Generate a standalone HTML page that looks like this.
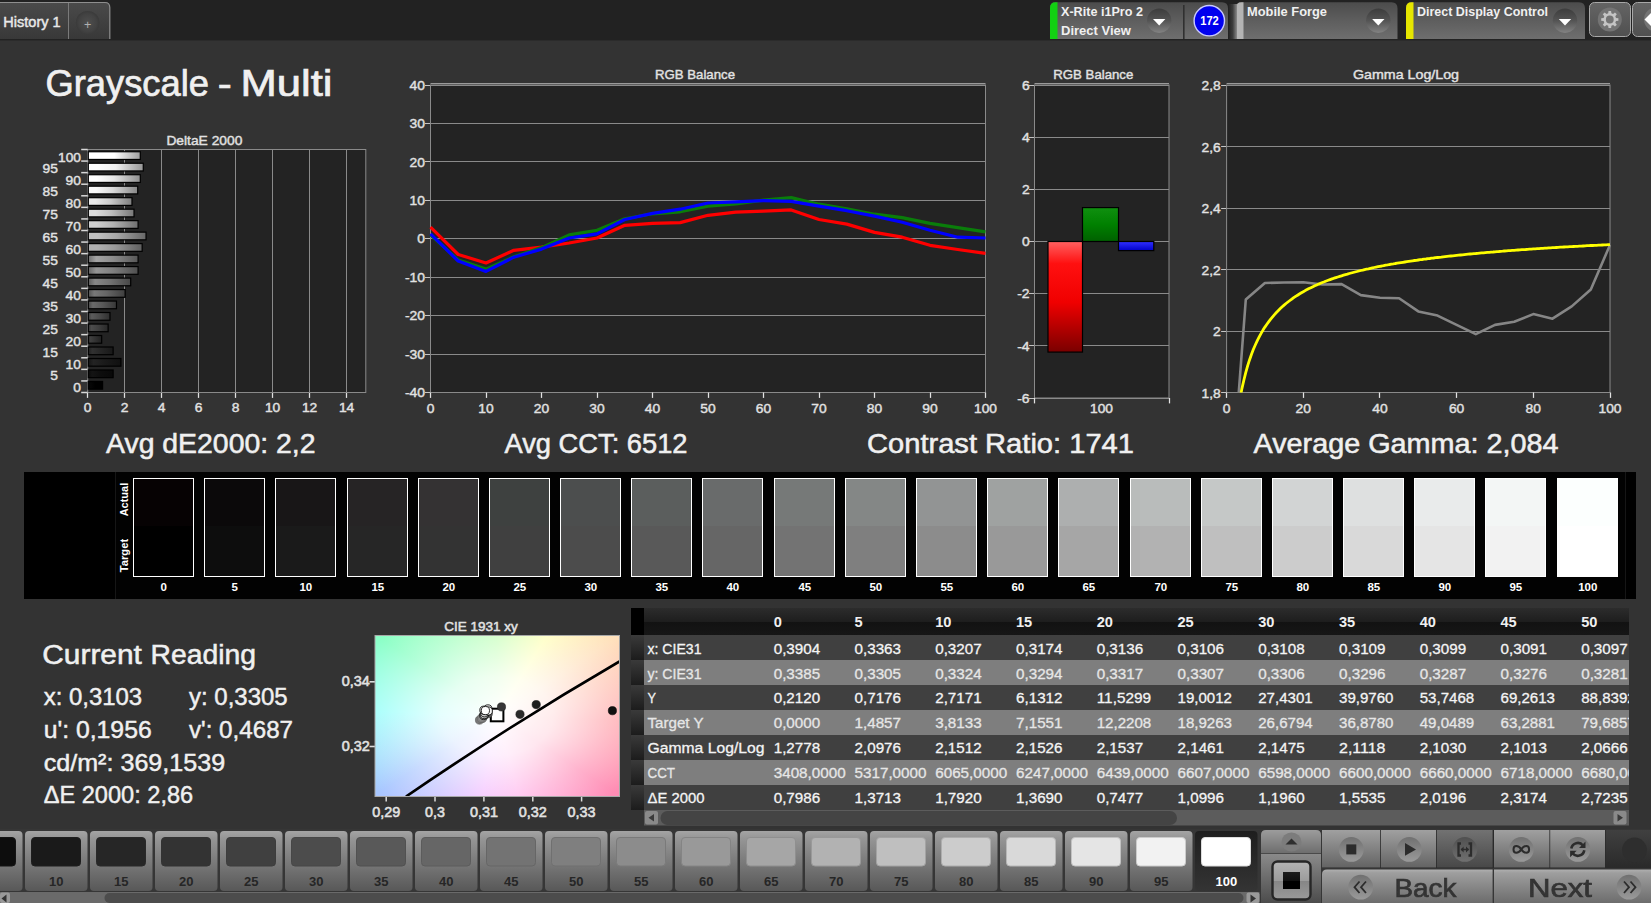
<!DOCTYPE html>
<html lang="en"><head><meta charset="utf-8"><title>Grayscale - Multi</title>
<style>html,body{margin:0;padding:0;background:#333333;}body{width:1651px;height:903px;position:relative;overflow:hidden;font-family:'Liberation Sans', sans-serif;}svg{position:absolute;left:0;top:0;}svg text{font-family:'Liberation Sans', sans-serif;}</style></head>
<body>
<div style="position:absolute;left:375px;top:635.5px;width:244.5px;height:161px;background:radial-gradient(ellipse 160px 112px at 122px 80px, rgba(255,255,255,1) 0%, rgba(255,255,255,0.78) 35%, rgba(255,255,255,0.34) 70%, rgba(255,255,255,0) 100%),conic-gradient(from 0deg at 122px 80px, #c4ffb8 0deg, #ffffb8 32deg, #ffe0bc 57deg, #ffa4aa 92deg, #ff8cb4 123deg, #ffb4ec 165deg, #f2b8ff 190deg, #a8c6ff 237deg, #8cfffa 272deg, #8cffc6 304deg, #c4ffb8 360deg);"></div>
<svg width="1651" height="903" viewBox="0 0 1651 903">
<defs>
<linearGradient id="tabg" x1="0" y1="0" x2="0" y2="1"><stop offset="0" stop-color="#4a4a4a"/><stop offset="1" stop-color="#383838"/></linearGradient>
<linearGradient id="devg" x1="0" y1="0" x2="0" y2="1"><stop offset="0" stop-color="#4c4c4c"/><stop offset="0.5" stop-color="#5e5e5e"/><stop offset="1" stop-color="#6e6e6e"/></linearGradient>
<radialGradient id="circd" cx="0.5" cy="0.5" r="0.5"><stop offset="0" stop-color="#4e4e4e"/><stop offset="0.75" stop-color="#424242"/><stop offset="1" stop-color="#3a3a3a"/></radialGradient>
<linearGradient id="circ2" x1="0" y1="0" x2="0" y2="1"><stop offset="0" stop-color="#3c3c3c"/><stop offset="0.5" stop-color="#545454"/><stop offset="1" stop-color="#828282"/></linearGradient>
<linearGradient id="glow" x1="0" y1="0" x2="1" y2="0"><stop offset="0" stop-color="#222222"/><stop offset="0.5" stop-color="#3c3c3c"/><stop offset="1" stop-color="#8a8a8a"/></linearGradient>
<linearGradient id="btng" x1="0" y1="0" x2="0" y2="1"><stop offset="0" stop-color="#646464"/><stop offset="1" stop-color="#505050"/></linearGradient>
<linearGradient id="db100" x1="0" y1="0" x2="1" y2="0"><stop offset="0" stop-color="#ffffff"/><stop offset="0.16" stop-color="#ffffff"/><stop offset="0.5" stop-color="#ffffff"/><stop offset="1" stop-color="#9e9e9e"/></linearGradient>
<linearGradient id="db95" x1="0" y1="0" x2="1" y2="0"><stop offset="0" stop-color="#ffffff"/><stop offset="0.16" stop-color="#ffffff"/><stop offset="0.5" stop-color="#f2f2f2"/><stop offset="1" stop-color="#969696"/></linearGradient>
<linearGradient id="db90" x1="0" y1="0" x2="1" y2="0"><stop offset="0" stop-color="#ffffff"/><stop offset="0.16" stop-color="#ffffff"/><stop offset="0.5" stop-color="#e5e5e5"/><stop offset="1" stop-color="#8e8e8e"/></linearGradient>
<linearGradient id="db85" x1="0" y1="0" x2="1" y2="0"><stop offset="0" stop-color="#f9f9f9"/><stop offset="0.16" stop-color="#f9f9f9"/><stop offset="0.5" stop-color="#d9d9d9"/><stop offset="1" stop-color="#868686"/></linearGradient>
<linearGradient id="db80" x1="0" y1="0" x2="1" y2="0"><stop offset="0" stop-color="#eaeaea"/><stop offset="0.16" stop-color="#eaeaea"/><stop offset="0.5" stop-color="#cccccc"/><stop offset="1" stop-color="#7e7e7e"/></linearGradient>
<linearGradient id="db75" x1="0" y1="0" x2="1" y2="0"><stop offset="0" stop-color="#dcdcdc"/><stop offset="0.16" stop-color="#dcdcdc"/><stop offset="0.5" stop-color="#bfbfbf"/><stop offset="1" stop-color="#777777"/></linearGradient>
<linearGradient id="db70" x1="0" y1="0" x2="1" y2="0"><stop offset="0" stop-color="#cecece"/><stop offset="0.16" stop-color="#cecece"/><stop offset="0.5" stop-color="#b2b2b2"/><stop offset="1" stop-color="#6f6f6f"/></linearGradient>
<linearGradient id="db65" x1="0" y1="0" x2="1" y2="0"><stop offset="0" stop-color="#c0c0c0"/><stop offset="0.16" stop-color="#c0c0c0"/><stop offset="0.5" stop-color="#a6a6a6"/><stop offset="1" stop-color="#676767"/></linearGradient>
<linearGradient id="db60" x1="0" y1="0" x2="1" y2="0"><stop offset="0" stop-color="#b1b1b1"/><stop offset="0.16" stop-color="#b1b1b1"/><stop offset="0.5" stop-color="#999999"/><stop offset="1" stop-color="#5f5f5f"/></linearGradient>
<linearGradient id="db55" x1="0" y1="0" x2="1" y2="0"><stop offset="0" stop-color="#707070"/><stop offset="0.16" stop-color="#a3a3a3"/><stop offset="0.5" stop-color="#8c8c8c"/><stop offset="1" stop-color="#575757"/></linearGradient>
<linearGradient id="db50" x1="0" y1="0" x2="1" y2="0"><stop offset="0" stop-color="#666666"/><stop offset="0.16" stop-color="#959595"/><stop offset="0.5" stop-color="#7f7f7f"/><stop offset="1" stop-color="#4f4f4f"/></linearGradient>
<linearGradient id="db45" x1="0" y1="0" x2="1" y2="0"><stop offset="0" stop-color="#5c5c5c"/><stop offset="0.16" stop-color="#878787"/><stop offset="0.5" stop-color="#737373"/><stop offset="1" stop-color="#474747"/></linearGradient>
<linearGradient id="db40" x1="0" y1="0" x2="1" y2="0"><stop offset="0" stop-color="#525252"/><stop offset="0.16" stop-color="#787878"/><stop offset="0.5" stop-color="#666666"/><stop offset="1" stop-color="#3f3f3f"/></linearGradient>
<linearGradient id="db35" x1="0" y1="0" x2="1" y2="0"><stop offset="0" stop-color="#474747"/><stop offset="0.16" stop-color="#6a6a6a"/><stop offset="0.5" stop-color="#595959"/><stop offset="1" stop-color="#373737"/></linearGradient>
<linearGradient id="db30" x1="0" y1="0" x2="1" y2="0"><stop offset="0" stop-color="#3d3d3d"/><stop offset="0.16" stop-color="#5c5c5c"/><stop offset="0.5" stop-color="#4c4c4c"/><stop offset="1" stop-color="#2f2f2f"/></linearGradient>
<linearGradient id="db25" x1="0" y1="0" x2="1" y2="0"><stop offset="0" stop-color="#333333"/><stop offset="0.16" stop-color="#4d4d4d"/><stop offset="0.5" stop-color="#404040"/><stop offset="1" stop-color="#282828"/></linearGradient>
<linearGradient id="db20" x1="0" y1="0" x2="1" y2="0"><stop offset="0" stop-color="#292929"/><stop offset="0.16" stop-color="#3f3f3f"/><stop offset="0.5" stop-color="#333333"/><stop offset="1" stop-color="#202020"/></linearGradient>
<linearGradient id="db15" x1="0" y1="0" x2="1" y2="0"><stop offset="0" stop-color="#1f1f1f"/><stop offset="0.16" stop-color="#313131"/><stop offset="0.5" stop-color="#262626"/><stop offset="1" stop-color="#181818"/></linearGradient>
<linearGradient id="db10" x1="0" y1="0" x2="1" y2="0"><stop offset="0" stop-color="#141414"/><stop offset="0.16" stop-color="#232323"/><stop offset="0.5" stop-color="#1a1a1a"/><stop offset="1" stop-color="#101010"/></linearGradient>
<linearGradient id="db5" x1="0" y1="0" x2="1" y2="0"><stop offset="0" stop-color="#0a0a0a"/><stop offset="0.16" stop-color="#141414"/><stop offset="0.5" stop-color="#0d0d0d"/><stop offset="1" stop-color="#080808"/></linearGradient>
<linearGradient id="db0" x1="0" y1="0" x2="1" y2="0"><stop offset="0" stop-color="#000000"/><stop offset="0.16" stop-color="#060606"/><stop offset="0.5" stop-color="#000000"/><stop offset="1" stop-color="#000000"/></linearGradient>
<linearGradient id="rbar" x1="0" y1="0" x2="0" y2="1"><stop offset="0" stop-color="#ff6060"/><stop offset="0.2" stop-color="#ff1010"/><stop offset="0.55" stop-color="#f00000"/><stop offset="1" stop-color="#7a0000"/></linearGradient>
<linearGradient id="gbar" x1="0" y1="0" x2="0" y2="1"><stop offset="0" stop-color="#109010"/><stop offset="0.5" stop-color="#008000"/><stop offset="1" stop-color="#006000"/></linearGradient>
<linearGradient id="bbar" x1="0" y1="0" x2="0" y2="1"><stop offset="0" stop-color="#3030ff"/><stop offset="1" stop-color="#0000c8"/></linearGradient>
<clipPath id="gclip"><rect x="1226.6" y="85.0" width="384.4000000000001" height="307.5"/></clipPath>
<clipPath id="cclip"><rect x="375.0" y="635.5" width="244.5" height="161.0"/></clipPath>
<linearGradient id="thead" x1="0" y1="0" x2="0" y2="1"><stop offset="0" stop-color="#2c2c2c"/><stop offset="0.5" stop-color="#1e1e1e"/><stop offset="0.52" stop-color="#121212"/><stop offset="1" stop-color="#161616"/></linearGradient>
<clipPath id="tclip"><rect x="631.0" y="600" width="998.0" height="230"/></clipPath>
<linearGradient id="rhd" x1="0" y1="0" x2="0" y2="1"><stop offset="0" stop-color="#3a3a3a"/><stop offset="1" stop-color="#1c1c1c"/></linearGradient>
<linearGradient id="rhl" x1="0" y1="0" x2="0" y2="1"><stop offset="0" stop-color="#4a4a4a"/><stop offset="1" stop-color="#2a2a2a"/></linearGradient>
<linearGradient id="pbtn" x1="0" y1="0" x2="0" y2="1"><stop offset="0" stop-color="#a4a4a4"/><stop offset="0.12" stop-color="#969696"/><stop offset="1" stop-color="#585858"/></linearGradient>
<linearGradient id="pbsel" x1="0" y1="0" x2="0" y2="1"><stop offset="0" stop-color="#1e1e1e"/><stop offset="1" stop-color="#343434"/></linearGradient>
<linearGradient id="pan" x1="0" y1="0" x2="0" y2="1"><stop offset="0" stop-color="#9c9c9c"/><stop offset="1" stop-color="#6e6e6e"/></linearGradient>
<linearGradient id="pan2" x1="0" y1="0" x2="0" y2="1"><stop offset="0" stop-color="#8a8a8a"/><stop offset="1" stop-color="#4c4c4c"/></linearGradient>
<radialGradient id="ic" cx="0.5" cy="0.5" r="0.5"><stop offset="0" stop-color="#8a8a8a"/><stop offset="0.7" stop-color="#808080"/><stop offset="1" stop-color="#9a9a9a"/></radialGradient>
<linearGradient id="sqb" x1="0" y1="0" x2="0" y2="1"><stop offset="0" stop-color="#b4b4b4"/><stop offset="0.5" stop-color="#9c9c9c"/><stop offset="0.52" stop-color="#868686"/><stop offset="1" stop-color="#9a9a9a"/></linearGradient>
<linearGradient id="sqi" x1="0" y1="0" x2="0" y2="1"><stop offset="0" stop-color="#1c1c1c"/><stop offset="0.5" stop-color="#101010"/><stop offset="0.52" stop-color="#000000"/><stop offset="1" stop-color="#000000"/></linearGradient>
<linearGradient id="tb" x1="0" y1="0" x2="0" y2="1"><stop offset="0" stop-color="#a0a0a0"/><stop offset="1" stop-color="#646464"/></linearGradient>
<linearGradient id="tbd" x1="0" y1="0" x2="0" y2="1"><stop offset="0" stop-color="#727272"/><stop offset="1" stop-color="#484848"/></linearGradient>
<linearGradient id="tcirc" x1="0" y1="0" x2="0" y2="1"><stop offset="0" stop-color="#707070"/><stop offset="1" stop-color="#9a9a9a"/></linearGradient>
<linearGradient id="tcircd" x1="0" y1="0" x2="0" y2="1"><stop offset="0" stop-color="#505050"/><stop offset="1" stop-color="#707070"/></linearGradient>
<linearGradient id="dk" x1="0" y1="0" x2="0" y2="1"><stop offset="0" stop-color="#404040"/><stop offset="1" stop-color="#2a2a2a"/></linearGradient>
<linearGradient id="bn" x1="0" y1="0" x2="0" y2="1"><stop offset="0" stop-color="#b0b0b0"/><stop offset="0.1" stop-color="#9e9e9e"/><stop offset="1" stop-color="#6c6c6c"/></linearGradient>
<filter id="tsh" x="-5%" y="-20%" width="110%" height="140%"><feGaussianBlur stdDeviation="0.7"/></filter>
</defs>
<rect x="0.00" y="0.00" width="1651.00" height="40.00" fill="#222222"/>
<rect x="0.00" y="40.00" width="1651.00" height="1.00" fill="#2b2b2b"/>
<path d="M-1 2.5 H105 Q109.8 2.5 109.8 7.5 V39 H-1 Z" fill="url(#tabg)"/>
<path d="M-1 2.5 H105 Q109.8 2.5 109.8 7.5 V39" fill="none" stroke="#8e8e8e" stroke-width="1.2"/>
<line x1="68.50" y1="3.00" x2="68.50" y2="39.00" stroke="#7a7a7a" stroke-width="1"/>
<circle cx="87.7" cy="22.7" r="11.8" fill="url(#circd)"/>
<text x="87.7" y="28.8" font-size="12.5" text-anchor="middle" fill="#b0b0b0">+</text>
<text x="3.3" y="27.2" font-size="14.2" fill="#e8e8e8" textLength="57.3" lengthAdjust="spacingAndGlyphs" stroke="#e8e8e8" stroke-width="0.45">History 1</text>
<path d="M1050 39 V8 Q1050 2.3 1055.5 2.3 H1222 Q1228 2.3 1228 8.5 V39 Z" fill="url(#devg)"/>
<path d="M1050 39 V8 Q1050 2.3 1055.5 2.3 H1057.5 V39 Z" fill="#12d012"/>
<path d="M1236 39 V8 Q1236 2.3 1241.5 2.3 H1391.5 Q1397.5 2.3 1397.5 8.5 V39 Z" fill="url(#devg)"/>
<path d="M1236 39 V8 Q1236 2.3 1241.5 2.3 H1243.5 V39 Z" fill="#b4b4b4"/>
<path d="M1406 39 V8 Q1406 2.3 1411.5 2.3 H1579 Q1585 2.3 1585 8.5 V39 Z" fill="url(#devg)"/>
<path d="M1406 39 V8 Q1406 2.3 1411.5 2.3 H1413.5 V39 Z" fill="#e6e600"/>
<rect x="1228.50" y="4.00" width="8.50" height="35.00" fill="url(#glow)"/>
<text x="1061.0" y="16.3" font-size="13" font-weight="bold" fill="#f0f0f0" textLength="82.0" lengthAdjust="spacingAndGlyphs">X-Rite i1Pro 2</text>
<text x="1061.0" y="35.0" font-size="13" font-weight="bold" fill="#f0f0f0" textLength="70.0" lengthAdjust="spacingAndGlyphs">Direct View</text>
<text x="1247.0" y="16.3" font-size="13" font-weight="bold" fill="#f0f0f0" textLength="80.0" lengthAdjust="spacingAndGlyphs">Mobile Forge</text>
<text x="1417.0" y="16.3" font-size="13" font-weight="bold" fill="#f0f0f0" textLength="131.0" lengthAdjust="spacingAndGlyphs">Direct Display Control</text>
<circle cx="1159.2" cy="20.7" r="12.2" fill="url(#circ2)"/>
<path d="M1153.0 19.0 H1165.4 L1159.2 25.5 Z" fill="#ffffff"/>
<circle cx="1378.3" cy="20.7" r="12.2" fill="url(#circ2)"/>
<path d="M1372.1 19.0 H1384.5 L1378.3 25.5 Z" fill="#ffffff"/>
<circle cx="1565" cy="20.7" r="12.2" fill="url(#circ2)"/>
<path d="M1558.8 19.0 H1571.2 L1565 25.5 Z" fill="#ffffff"/>
<rect x="1183.00" y="5.00" width="1.60" height="34.00" fill="#303030"/>
<circle cx="1209.3" cy="20.7" r="15.2" fill="#0000ee" stroke="#c8c8ff" stroke-width="1.4"/>
<text x="1209.5" y="25.2" font-size="12" text-anchor="middle" font-weight="bold" fill="#ffffff" textLength="18.6" lengthAdjust="spacingAndGlyphs">172</text>
<rect x="1589.50" y="2.50" width="41.00" height="34.00" fill="url(#btng)" stroke="#a8a8a8" stroke-width="1" rx="5"/>
<rect x="1632.50" y="2.50" width="41.00" height="34.00" fill="url(#btng)" stroke="#a8a8a8" stroke-width="1" rx="5"/>
<circle cx="1609.8" cy="19.5" r="12" fill="#747474"/>
<circle cx="1656" cy="19.5" r="12" fill="#747474"/>
<path d="M1651 13 L1644.5 19.5 L1651 26 Z" fill="#ffffff"/>
<path d="M1608.22 13.30 L1608.50 10.90 L1611.10 10.90 L1611.38 13.30 L1613.07 14.00 L1614.96 12.50 L1616.80 14.34 L1615.30 16.23 L1616.00 17.92 L1618.40 18.20 L1618.40 20.80 L1616.00 21.08 L1615.30 22.77 L1616.80 24.66 L1614.96 26.50 L1613.07 25.00 L1611.38 25.70 L1611.10 28.10 L1608.50 28.10 L1608.22 25.70 L1606.53 25.00 L1604.64 26.50 L1602.80 24.66 L1604.30 22.77 L1603.60 21.08 L1601.20 20.80 L1601.20 18.20 L1603.60 17.92 L1604.30 16.23 L1602.80 14.34 L1604.64 12.50 L1606.53 14.00 Z M1613.7 19.5 A3.9 3.9 0 1 0 1605.8999999999999 19.5 A3.9 3.9 0 1 0 1613.7 19.5 Z" fill="#c4c4c4" fill-rule="evenodd"/>
<text y="95.5" font-size="36.4" fill="#f0f0f0" stroke="#f0f0f0" stroke-width="0.7"><tspan x="45.5" textLength="163.5" lengthAdjust="spacingAndGlyphs">Grayscale</tspan> <tspan x="217.8" textLength="14.0" lengthAdjust="spacingAndGlyphs">-</tspan> <tspan x="240.5" textLength="92.0" lengthAdjust="spacingAndGlyphs">Multi</tspan></text>
<rect x="87.70" y="149.50" width="278.10" height="243.00" fill="#232323"/>
<line x1="124.50" y1="149.50" x2="124.50" y2="392.50" stroke="#8a8a8a" stroke-width="1"/>
<line x1="124.50" y1="392.50" x2="124.50" y2="397.90" stroke="#e2e2e2" stroke-width="1.25"/>
<line x1="161.50" y1="149.50" x2="161.50" y2="392.50" stroke="#8a8a8a" stroke-width="1"/>
<line x1="161.50" y1="392.50" x2="161.50" y2="397.90" stroke="#e2e2e2" stroke-width="1.25"/>
<line x1="198.50" y1="149.50" x2="198.50" y2="392.50" stroke="#8a8a8a" stroke-width="1"/>
<line x1="198.50" y1="392.50" x2="198.50" y2="397.90" stroke="#e2e2e2" stroke-width="1.25"/>
<line x1="235.50" y1="149.50" x2="235.50" y2="392.50" stroke="#8a8a8a" stroke-width="1"/>
<line x1="235.50" y1="392.50" x2="235.50" y2="397.90" stroke="#e2e2e2" stroke-width="1.25"/>
<line x1="272.50" y1="149.50" x2="272.50" y2="392.50" stroke="#8a8a8a" stroke-width="1"/>
<line x1="272.50" y1="392.50" x2="272.50" y2="397.90" stroke="#e2e2e2" stroke-width="1.25"/>
<line x1="309.50" y1="149.50" x2="309.50" y2="392.50" stroke="#8a8a8a" stroke-width="1"/>
<line x1="309.50" y1="392.50" x2="309.50" y2="397.90" stroke="#e2e2e2" stroke-width="1.25"/>
<line x1="346.50" y1="149.50" x2="346.50" y2="392.50" stroke="#8a8a8a" stroke-width="1"/>
<line x1="346.50" y1="392.50" x2="346.50" y2="397.90" stroke="#e2e2e2" stroke-width="1.25"/>
<line x1="87.50" y1="392.50" x2="87.50" y2="397.90" stroke="#e2e2e2" stroke-width="1.25"/>
<rect x="87.70" y="149.50" width="278.10" height="243.00" fill="none" stroke="#8a8a8a" stroke-width="1"/>
<text x="204.4" y="144.5" font-size="13" text-anchor="middle" fill="#e2e2e2" textLength="76.0" lengthAdjust="spacingAndGlyphs" stroke="#e2e2e2" stroke-width="0.4">DeltaE 2000</text>
<line x1="81.20" y1="149.50" x2="87.70" y2="149.50" stroke="#d8d8d8" stroke-width="1.5"/>
<rect x="88.30" y="151.75" width="52.01" height="7.70" fill="url(#db100)" stroke="#000000" stroke-width="1.2"/>
<text x="81.0" y="161.5" font-size="13" text-anchor="end" fill="#e2e2e2" textLength="23.0" lengthAdjust="spacingAndGlyphs" stroke="#e2e2e2" stroke-width="0.4">100</text>
<line x1="81.20" y1="161.07" x2="87.70" y2="161.07" stroke="#d8d8d8" stroke-width="1.5"/>
<rect x="88.30" y="163.24" width="54.97" height="7.70" fill="url(#db95)" stroke="#000000" stroke-width="1.2"/>
<text x="58.0" y="173.0" font-size="13" text-anchor="end" fill="#e2e2e2" textLength="15.4" lengthAdjust="spacingAndGlyphs" stroke="#e2e2e2" stroke-width="0.4">95</text>
<line x1="81.20" y1="172.64" x2="87.70" y2="172.64" stroke="#d8d8d8" stroke-width="1.5"/>
<rect x="88.30" y="174.72" width="52.01" height="7.70" fill="url(#db90)" stroke="#000000" stroke-width="1.2"/>
<text x="81.0" y="184.5" font-size="13" text-anchor="end" fill="#e2e2e2" textLength="15.4" lengthAdjust="spacingAndGlyphs" stroke="#e2e2e2" stroke-width="0.4">90</text>
<line x1="81.20" y1="184.21" x2="87.70" y2="184.21" stroke="#d8d8d8" stroke-width="1.5"/>
<rect x="88.30" y="186.20" width="49.42" height="7.70" fill="url(#db85)" stroke="#000000" stroke-width="1.2"/>
<text x="58.0" y="196.0" font-size="13" text-anchor="end" fill="#e2e2e2" textLength="15.4" lengthAdjust="spacingAndGlyphs" stroke="#e2e2e2" stroke-width="0.4">85</text>
<line x1="81.20" y1="195.79" x2="87.70" y2="195.79" stroke="#d8d8d8" stroke-width="1.5"/>
<rect x="88.30" y="197.69" width="43.69" height="7.70" fill="url(#db80)" stroke="#000000" stroke-width="1.2"/>
<text x="81.0" y="207.5" font-size="13" text-anchor="end" fill="#e2e2e2" textLength="15.4" lengthAdjust="spacingAndGlyphs" stroke="#e2e2e2" stroke-width="0.4">80</text>
<line x1="81.20" y1="207.36" x2="87.70" y2="207.36" stroke="#d8d8d8" stroke-width="1.5"/>
<rect x="88.30" y="209.18" width="45.72" height="7.70" fill="url(#db75)" stroke="#000000" stroke-width="1.2"/>
<text x="58.0" y="219.0" font-size="13" text-anchor="end" fill="#e2e2e2" textLength="15.4" lengthAdjust="spacingAndGlyphs" stroke="#e2e2e2" stroke-width="0.4">75</text>
<line x1="81.20" y1="218.93" x2="87.70" y2="218.93" stroke="#d8d8d8" stroke-width="1.5"/>
<rect x="88.30" y="220.66" width="49.79" height="7.70" fill="url(#db70)" stroke="#000000" stroke-width="1.2"/>
<text x="81.0" y="230.6" font-size="13" text-anchor="end" fill="#e2e2e2" textLength="15.4" lengthAdjust="spacingAndGlyphs" stroke="#e2e2e2" stroke-width="0.4">70</text>
<line x1="81.20" y1="230.50" x2="87.70" y2="230.50" stroke="#d8d8d8" stroke-width="1.5"/>
<rect x="88.30" y="232.14" width="57.74" height="7.70" fill="url(#db65)" stroke="#000000" stroke-width="1.2"/>
<text x="58.0" y="242.1" font-size="13" text-anchor="end" fill="#e2e2e2" textLength="15.4" lengthAdjust="spacingAndGlyphs" stroke="#e2e2e2" stroke-width="0.4">65</text>
<line x1="81.20" y1="242.07" x2="87.70" y2="242.07" stroke="#d8d8d8" stroke-width="1.5"/>
<rect x="88.30" y="243.63" width="53.86" height="7.70" fill="url(#db60)" stroke="#000000" stroke-width="1.2"/>
<text x="81.0" y="253.6" font-size="13" text-anchor="end" fill="#e2e2e2" textLength="15.4" lengthAdjust="spacingAndGlyphs" stroke="#e2e2e2" stroke-width="0.4">60</text>
<line x1="81.20" y1="253.64" x2="87.70" y2="253.64" stroke="#d8d8d8" stroke-width="1.5"/>
<rect x="88.30" y="255.12" width="49.79" height="7.70" fill="url(#db55)" stroke="#000000" stroke-width="1.2"/>
<text x="58.0" y="265.1" font-size="13" text-anchor="end" fill="#e2e2e2" textLength="15.4" lengthAdjust="spacingAndGlyphs" stroke="#e2e2e2" stroke-width="0.4">55</text>
<line x1="81.20" y1="265.21" x2="87.70" y2="265.21" stroke="#d8d8d8" stroke-width="1.5"/>
<rect x="88.30" y="266.60" width="49.79" height="7.70" fill="url(#db50)" stroke="#000000" stroke-width="1.2"/>
<text x="81.0" y="276.6" font-size="13" text-anchor="end" fill="#e2e2e2" textLength="15.4" lengthAdjust="spacingAndGlyphs" stroke="#e2e2e2" stroke-width="0.4">50</text>
<line x1="81.20" y1="276.79" x2="87.70" y2="276.79" stroke="#d8d8d8" stroke-width="1.5"/>
<rect x="88.30" y="278.08" width="42.40" height="7.70" fill="url(#db45)" stroke="#000000" stroke-width="1.2"/>
<text x="58.0" y="288.1" font-size="13" text-anchor="end" fill="#e2e2e2" textLength="15.4" lengthAdjust="spacingAndGlyphs" stroke="#e2e2e2" stroke-width="0.4">45</text>
<line x1="81.20" y1="288.36" x2="87.70" y2="288.36" stroke="#d8d8d8" stroke-width="1.5"/>
<rect x="88.30" y="289.57" width="36.85" height="7.70" fill="url(#db40)" stroke="#000000" stroke-width="1.2"/>
<text x="81.0" y="299.6" font-size="13" text-anchor="end" fill="#e2e2e2" textLength="15.4" lengthAdjust="spacingAndGlyphs" stroke="#e2e2e2" stroke-width="0.4">40</text>
<line x1="81.20" y1="299.93" x2="87.70" y2="299.93" stroke="#d8d8d8" stroke-width="1.5"/>
<rect x="88.30" y="301.06" width="28.16" height="7.70" fill="url(#db35)" stroke="#000000" stroke-width="1.2"/>
<text x="58.0" y="311.1" font-size="13" text-anchor="end" fill="#e2e2e2" textLength="15.4" lengthAdjust="spacingAndGlyphs" stroke="#e2e2e2" stroke-width="0.4">35</text>
<line x1="81.20" y1="311.50" x2="87.70" y2="311.50" stroke="#d8d8d8" stroke-width="1.5"/>
<rect x="88.30" y="312.54" width="21.69" height="7.70" fill="url(#db30)" stroke="#000000" stroke-width="1.2"/>
<text x="81.0" y="322.6" font-size="13" text-anchor="end" fill="#e2e2e2" textLength="15.4" lengthAdjust="spacingAndGlyphs" stroke="#e2e2e2" stroke-width="0.4">30</text>
<line x1="81.20" y1="323.07" x2="87.70" y2="323.07" stroke="#d8d8d8" stroke-width="1.5"/>
<rect x="88.30" y="324.02" width="19.84" height="7.70" fill="url(#db25)" stroke="#000000" stroke-width="1.2"/>
<text x="58.0" y="334.1" font-size="13" text-anchor="end" fill="#e2e2e2" textLength="15.4" lengthAdjust="spacingAndGlyphs" stroke="#e2e2e2" stroke-width="0.4">25</text>
<line x1="81.20" y1="334.64" x2="87.70" y2="334.64" stroke="#d8d8d8" stroke-width="1.5"/>
<rect x="88.30" y="335.51" width="13.37" height="7.70" fill="url(#db20)" stroke="#000000" stroke-width="1.2"/>
<text x="81.0" y="345.7" font-size="13" text-anchor="end" fill="#e2e2e2" textLength="15.4" lengthAdjust="spacingAndGlyphs" stroke="#e2e2e2" stroke-width="0.4">20</text>
<line x1="81.20" y1="346.21" x2="87.70" y2="346.21" stroke="#d8d8d8" stroke-width="1.5"/>
<rect x="88.30" y="347.00" width="24.83" height="7.70" fill="url(#db15)" stroke="#000000" stroke-width="1.2"/>
<text x="58.0" y="357.2" font-size="13" text-anchor="end" fill="#e2e2e2" textLength="15.4" lengthAdjust="spacingAndGlyphs" stroke="#e2e2e2" stroke-width="0.4">15</text>
<line x1="81.20" y1="357.79" x2="87.70" y2="357.79" stroke="#d8d8d8" stroke-width="1.5"/>
<rect x="88.30" y="358.48" width="32.60" height="7.70" fill="url(#db10)" stroke="#000000" stroke-width="1.2"/>
<text x="81.0" y="368.7" font-size="13" text-anchor="end" fill="#e2e2e2" textLength="15.4" lengthAdjust="spacingAndGlyphs" stroke="#e2e2e2" stroke-width="0.4">10</text>
<line x1="81.20" y1="369.36" x2="87.70" y2="369.36" stroke="#d8d8d8" stroke-width="1.5"/>
<rect x="88.30" y="369.96" width="24.83" height="7.70" fill="url(#db5)" stroke="#000000" stroke-width="1.2"/>
<text x="58.0" y="380.2" font-size="13" text-anchor="end" fill="#e2e2e2" textLength="7.7" lengthAdjust="spacingAndGlyphs" stroke="#e2e2e2" stroke-width="0.4">5</text>
<line x1="81.20" y1="380.93" x2="87.70" y2="380.93" stroke="#d8d8d8" stroke-width="1.5"/>
<rect x="88.30" y="381.45" width="14.29" height="7.70" fill="url(#db0)" stroke="#000000" stroke-width="1.2"/>
<text x="81.0" y="391.7" font-size="13" text-anchor="end" fill="#e2e2e2" textLength="7.7" lengthAdjust="spacingAndGlyphs" stroke="#e2e2e2" stroke-width="0.4">0</text>
<line x1="81.20" y1="392.50" x2="87.70" y2="392.50" stroke="#d8d8d8" stroke-width="1.5"/>
<text x="87.7" y="412.3" font-size="13" text-anchor="middle" fill="#e2e2e2" textLength="7.7" lengthAdjust="spacingAndGlyphs" stroke="#e2e2e2" stroke-width="0.4">0</text>
<text x="124.7" y="412.3" font-size="13" text-anchor="middle" fill="#e2e2e2" textLength="7.7" lengthAdjust="spacingAndGlyphs" stroke="#e2e2e2" stroke-width="0.4">2</text>
<text x="161.7" y="412.3" font-size="13" text-anchor="middle" fill="#e2e2e2" textLength="7.7" lengthAdjust="spacingAndGlyphs" stroke="#e2e2e2" stroke-width="0.4">4</text>
<text x="198.6" y="412.3" font-size="13" text-anchor="middle" fill="#e2e2e2" textLength="7.7" lengthAdjust="spacingAndGlyphs" stroke="#e2e2e2" stroke-width="0.4">6</text>
<text x="235.6" y="412.3" font-size="13" text-anchor="middle" fill="#e2e2e2" textLength="7.7" lengthAdjust="spacingAndGlyphs" stroke="#e2e2e2" stroke-width="0.4">8</text>
<text x="272.6" y="412.3" font-size="13" text-anchor="middle" fill="#e2e2e2" textLength="15.4" lengthAdjust="spacingAndGlyphs" stroke="#e2e2e2" stroke-width="0.4">10</text>
<text x="309.6" y="412.3" font-size="13" text-anchor="middle" fill="#e2e2e2" textLength="15.4" lengthAdjust="spacingAndGlyphs" stroke="#e2e2e2" stroke-width="0.4">12</text>
<text x="346.6" y="412.3" font-size="13" text-anchor="middle" fill="#e2e2e2" textLength="15.4" lengthAdjust="spacingAndGlyphs" stroke="#e2e2e2" stroke-width="0.4">14</text>
<text x="106.0" y="453.0" font-size="28.4" fill="#f0f0f0" textLength="209.5" lengthAdjust="spacingAndGlyphs" stroke="#f0f0f0" stroke-width="0.55">Avg dE2000: 2,2</text>
<rect x="430.50" y="85.00" width="555.00" height="307.50" fill="#232323"/>
<line x1="430.50" y1="392.50" x2="985.50" y2="392.50" stroke="#8a8a8a" stroke-width="1"/>
<line x1="425.00" y1="392.50" x2="430.50" y2="392.50" stroke="#c4c4c4" stroke-width="1"/>
<text x="425.0" y="397.2" font-size="13.4" text-anchor="end" fill="#e2e2e2" textLength="20.1" lengthAdjust="spacingAndGlyphs" stroke="#e2e2e2" stroke-width="0.4">-40</text>
<line x1="430.50" y1="354.50" x2="985.50" y2="354.50" stroke="#8a8a8a" stroke-width="1"/>
<line x1="425.00" y1="354.50" x2="430.50" y2="354.50" stroke="#c4c4c4" stroke-width="1"/>
<text x="425.0" y="358.8" font-size="13.4" text-anchor="end" fill="#e2e2e2" textLength="20.1" lengthAdjust="spacingAndGlyphs" stroke="#e2e2e2" stroke-width="0.4">-30</text>
<line x1="430.50" y1="315.50" x2="985.50" y2="315.50" stroke="#8a8a8a" stroke-width="1"/>
<line x1="425.00" y1="315.50" x2="430.50" y2="315.50" stroke="#c4c4c4" stroke-width="1"/>
<text x="425.0" y="320.3" font-size="13.4" text-anchor="end" fill="#e2e2e2" textLength="20.1" lengthAdjust="spacingAndGlyphs" stroke="#e2e2e2" stroke-width="0.4">-20</text>
<line x1="430.50" y1="277.50" x2="985.50" y2="277.50" stroke="#8a8a8a" stroke-width="1"/>
<line x1="425.00" y1="277.50" x2="430.50" y2="277.50" stroke="#c4c4c4" stroke-width="1"/>
<text x="425.0" y="281.9" font-size="13.4" text-anchor="end" fill="#e2e2e2" textLength="20.1" lengthAdjust="spacingAndGlyphs" stroke="#e2e2e2" stroke-width="0.4">-10</text>
<line x1="430.50" y1="238.50" x2="985.50" y2="238.50" stroke="#8a8a8a" stroke-width="1"/>
<line x1="425.00" y1="238.50" x2="430.50" y2="238.50" stroke="#c4c4c4" stroke-width="1"/>
<text x="425.0" y="243.4" font-size="13.4" text-anchor="end" fill="#e2e2e2" textLength="7.7" lengthAdjust="spacingAndGlyphs" stroke="#e2e2e2" stroke-width="0.4">0</text>
<line x1="430.50" y1="200.50" x2="985.50" y2="200.50" stroke="#8a8a8a" stroke-width="1"/>
<line x1="425.00" y1="200.50" x2="430.50" y2="200.50" stroke="#c4c4c4" stroke-width="1"/>
<text x="425.0" y="205.0" font-size="13.4" text-anchor="end" fill="#e2e2e2" textLength="15.4" lengthAdjust="spacingAndGlyphs" stroke="#e2e2e2" stroke-width="0.4">10</text>
<line x1="430.50" y1="161.50" x2="985.50" y2="161.50" stroke="#8a8a8a" stroke-width="1"/>
<line x1="425.00" y1="161.50" x2="430.50" y2="161.50" stroke="#c4c4c4" stroke-width="1"/>
<text x="425.0" y="166.6" font-size="13.4" text-anchor="end" fill="#e2e2e2" textLength="15.4" lengthAdjust="spacingAndGlyphs" stroke="#e2e2e2" stroke-width="0.4">20</text>
<line x1="430.50" y1="123.50" x2="985.50" y2="123.50" stroke="#8a8a8a" stroke-width="1"/>
<line x1="425.00" y1="123.50" x2="430.50" y2="123.50" stroke="#c4c4c4" stroke-width="1"/>
<text x="425.0" y="128.1" font-size="13.4" text-anchor="end" fill="#e2e2e2" textLength="15.4" lengthAdjust="spacingAndGlyphs" stroke="#e2e2e2" stroke-width="0.4">30</text>
<line x1="430.50" y1="85.50" x2="985.50" y2="85.50" stroke="#8a8a8a" stroke-width="1"/>
<line x1="425.00" y1="85.50" x2="430.50" y2="85.50" stroke="#c4c4c4" stroke-width="1"/>
<text x="425.0" y="89.7" font-size="13.4" text-anchor="end" fill="#e2e2e2" textLength="15.4" lengthAdjust="spacingAndGlyphs" stroke="#e2e2e2" stroke-width="0.4">40</text>
<rect x="430.50" y="85.00" width="555.00" height="307.50" fill="none" stroke="#8a8a8a" stroke-width="1"/>
<line x1="430.50" y1="83.50" x2="985.50" y2="83.50" stroke="#9a9a9a" stroke-width="1"/>
<line x1="430.50" y1="392.50" x2="430.50" y2="397.90" stroke="#e2e2e2" stroke-width="1.25"/>
<text x="430.5" y="412.5" font-size="13" text-anchor="middle" fill="#e2e2e2" textLength="7.7" lengthAdjust="spacingAndGlyphs" stroke="#e2e2e2" stroke-width="0.4">0</text>
<line x1="486.50" y1="392.50" x2="486.50" y2="397.90" stroke="#e2e2e2" stroke-width="1.25"/>
<text x="486.0" y="412.5" font-size="13" text-anchor="middle" fill="#e2e2e2" textLength="15.4" lengthAdjust="spacingAndGlyphs" stroke="#e2e2e2" stroke-width="0.4">10</text>
<line x1="541.50" y1="392.50" x2="541.50" y2="397.90" stroke="#e2e2e2" stroke-width="1.25"/>
<text x="541.5" y="412.5" font-size="13" text-anchor="middle" fill="#e2e2e2" textLength="15.4" lengthAdjust="spacingAndGlyphs" stroke="#e2e2e2" stroke-width="0.4">20</text>
<line x1="597.50" y1="392.50" x2="597.50" y2="397.90" stroke="#e2e2e2" stroke-width="1.25"/>
<text x="597.0" y="412.5" font-size="13" text-anchor="middle" fill="#e2e2e2" textLength="15.4" lengthAdjust="spacingAndGlyphs" stroke="#e2e2e2" stroke-width="0.4">30</text>
<line x1="652.50" y1="392.50" x2="652.50" y2="397.90" stroke="#e2e2e2" stroke-width="1.25"/>
<text x="652.5" y="412.5" font-size="13" text-anchor="middle" fill="#e2e2e2" textLength="15.4" lengthAdjust="spacingAndGlyphs" stroke="#e2e2e2" stroke-width="0.4">40</text>
<line x1="708.50" y1="392.50" x2="708.50" y2="397.90" stroke="#e2e2e2" stroke-width="1.25"/>
<text x="708.0" y="412.5" font-size="13" text-anchor="middle" fill="#e2e2e2" textLength="15.4" lengthAdjust="spacingAndGlyphs" stroke="#e2e2e2" stroke-width="0.4">50</text>
<line x1="763.50" y1="392.50" x2="763.50" y2="397.90" stroke="#e2e2e2" stroke-width="1.25"/>
<text x="763.5" y="412.5" font-size="13" text-anchor="middle" fill="#e2e2e2" textLength="15.4" lengthAdjust="spacingAndGlyphs" stroke="#e2e2e2" stroke-width="0.4">60</text>
<line x1="819.50" y1="392.50" x2="819.50" y2="397.90" stroke="#e2e2e2" stroke-width="1.25"/>
<text x="819.0" y="412.5" font-size="13" text-anchor="middle" fill="#e2e2e2" textLength="15.4" lengthAdjust="spacingAndGlyphs" stroke="#e2e2e2" stroke-width="0.4">70</text>
<line x1="874.50" y1="392.50" x2="874.50" y2="397.90" stroke="#e2e2e2" stroke-width="1.25"/>
<text x="874.5" y="412.5" font-size="13" text-anchor="middle" fill="#e2e2e2" textLength="15.4" lengthAdjust="spacingAndGlyphs" stroke="#e2e2e2" stroke-width="0.4">80</text>
<line x1="930.50" y1="392.50" x2="930.50" y2="397.90" stroke="#e2e2e2" stroke-width="1.25"/>
<text x="930.0" y="412.5" font-size="13" text-anchor="middle" fill="#e2e2e2" textLength="15.4" lengthAdjust="spacingAndGlyphs" stroke="#e2e2e2" stroke-width="0.4">90</text>
<line x1="985.50" y1="392.50" x2="985.50" y2="397.90" stroke="#e2e2e2" stroke-width="1.25"/>
<text x="985.5" y="412.5" font-size="13" text-anchor="middle" fill="#e2e2e2" textLength="23.0" lengthAdjust="spacingAndGlyphs" stroke="#e2e2e2" stroke-width="0.4">100</text>
<text x="695.0" y="78.8" font-size="13" text-anchor="middle" fill="#e2e2e2" textLength="80.0" lengthAdjust="spacingAndGlyphs" stroke="#e2e2e2" stroke-width="0.4">RGB Balance</text>
<polyline points="430.5,227.2 458.2,254.5 486.0,263.0 513.8,250.3 541.5,247.2 569.2,243.0 597.0,238.0 624.8,225.3 652.5,223.4 680.2,222.6 708.0,215.3 735.8,212.2 763.5,211.1 791.2,209.9 819.0,219.5 846.8,224.1 874.5,232.4 902.2,237.2 930.0,245.3 957.8,249.5 985.5,253.4" fill="none" stroke="#ff0000" stroke-width="3.2" stroke-linejoin="round"/>
<polyline points="430.5,234.9 458.2,259.9 486.0,269.1 513.8,256.8 541.5,247.6 569.2,234.9 597.0,230.3 624.8,218.8 652.5,213.8 680.2,211.8 708.0,206.1 735.8,203.8 763.5,200.1 791.2,197.6 819.0,204.2 846.8,208.8 874.5,214.2 902.2,217.6 930.0,223.4 957.8,227.6 985.5,231.8" fill="none" stroke="#0a7d0a" stroke-width="3.2" stroke-linejoin="round"/>
<polyline points="430.5,233.8 458.2,261.0 486.0,271.4 513.8,257.2 541.5,249.1 569.2,238.0 597.0,233.8 624.8,219.5 652.5,213.4 680.2,209.2 708.0,203.0 735.8,201.8 763.5,200.7 791.2,201.3 819.0,206.1 846.8,210.7 874.5,216.1 902.2,222.2 930.0,230.3 957.8,237.2 985.5,238.0" fill="none" stroke="#0000ff" stroke-width="3.2" stroke-linejoin="round"/>
<text x="504.5" y="453.0" font-size="28.4" fill="#f0f0f0" textLength="183.0" lengthAdjust="spacingAndGlyphs" stroke="#f0f0f0" stroke-width="0.55">Avg CCT: 6512</text>
<rect x="1034.50" y="85.00" width="134.50" height="313.00" fill="#232323"/>
<line x1="1034.50" y1="398.50" x2="1169.00" y2="398.50" stroke="#8a8a8a" stroke-width="1"/>
<line x1="1029.00" y1="398.50" x2="1034.50" y2="398.50" stroke="#c4c4c4" stroke-width="1"/>
<text x="1029.6" y="402.7" font-size="13.4" text-anchor="end" fill="#e2e2e2" textLength="12.4" lengthAdjust="spacingAndGlyphs" stroke="#e2e2e2" stroke-width="0.4">-6</text>
<line x1="1034.50" y1="345.50" x2="1169.00" y2="345.50" stroke="#8a8a8a" stroke-width="1"/>
<line x1="1029.00" y1="345.50" x2="1034.50" y2="345.50" stroke="#c4c4c4" stroke-width="1"/>
<text x="1029.6" y="350.5" font-size="13.4" text-anchor="end" fill="#e2e2e2" textLength="12.4" lengthAdjust="spacingAndGlyphs" stroke="#e2e2e2" stroke-width="0.4">-4</text>
<line x1="1034.50" y1="293.50" x2="1169.00" y2="293.50" stroke="#8a8a8a" stroke-width="1"/>
<line x1="1029.00" y1="293.50" x2="1034.50" y2="293.50" stroke="#c4c4c4" stroke-width="1"/>
<text x="1029.6" y="298.4" font-size="13.4" text-anchor="end" fill="#e2e2e2" textLength="12.4" lengthAdjust="spacingAndGlyphs" stroke="#e2e2e2" stroke-width="0.4">-2</text>
<line x1="1034.50" y1="241.50" x2="1169.00" y2="241.50" stroke="#8a8a8a" stroke-width="1"/>
<line x1="1029.00" y1="241.50" x2="1034.50" y2="241.50" stroke="#c4c4c4" stroke-width="1"/>
<text x="1029.6" y="246.2" font-size="13.4" text-anchor="end" fill="#e2e2e2" textLength="7.7" lengthAdjust="spacingAndGlyphs" stroke="#e2e2e2" stroke-width="0.4">0</text>
<line x1="1034.50" y1="189.50" x2="1169.00" y2="189.50" stroke="#8a8a8a" stroke-width="1"/>
<line x1="1029.00" y1="189.50" x2="1034.50" y2="189.50" stroke="#c4c4c4" stroke-width="1"/>
<text x="1029.6" y="194.0" font-size="13.4" text-anchor="end" fill="#e2e2e2" textLength="7.7" lengthAdjust="spacingAndGlyphs" stroke="#e2e2e2" stroke-width="0.4">2</text>
<line x1="1034.50" y1="137.50" x2="1169.00" y2="137.50" stroke="#8a8a8a" stroke-width="1"/>
<line x1="1029.00" y1="137.50" x2="1034.50" y2="137.50" stroke="#c4c4c4" stroke-width="1"/>
<text x="1029.6" y="141.9" font-size="13.4" text-anchor="end" fill="#e2e2e2" textLength="7.7" lengthAdjust="spacingAndGlyphs" stroke="#e2e2e2" stroke-width="0.4">4</text>
<line x1="1034.50" y1="85.50" x2="1169.00" y2="85.50" stroke="#8a8a8a" stroke-width="1"/>
<line x1="1029.00" y1="85.50" x2="1034.50" y2="85.50" stroke="#c4c4c4" stroke-width="1"/>
<text x="1029.6" y="89.7" font-size="13.4" text-anchor="end" fill="#e2e2e2" textLength="7.7" lengthAdjust="spacingAndGlyphs" stroke="#e2e2e2" stroke-width="0.4">6</text>
<rect x="1034.50" y="85.00" width="134.50" height="313.00" fill="none" stroke="#8a8a8a" stroke-width="1"/>
<line x1="1034.50" y1="83.50" x2="1169.00" y2="83.50" stroke="#9a9a9a" stroke-width="1"/>
<line x1="1034.50" y1="398.00" x2="1034.50" y2="403.40" stroke="#e2e2e2" stroke-width="1.25"/>
<line x1="1169.50" y1="398.00" x2="1169.50" y2="403.40" stroke="#e2e2e2" stroke-width="1.25"/>
<rect x="1048.00" y="241.50" width="34.50" height="110.59" fill="url(#rbar)" stroke="#000" stroke-width="1.2"/>
<rect x="1082.50" y="207.59" width="36.00" height="33.91" fill="url(#gbar)" stroke="#000" stroke-width="1.2"/>
<rect x="1118.50" y="241.50" width="35.30" height="9.13" fill="url(#bbar)" stroke="#000" stroke-width="1.2"/>
<text x="1093.3" y="78.8" font-size="13" text-anchor="middle" fill="#e2e2e2" textLength="80.0" lengthAdjust="spacingAndGlyphs" stroke="#e2e2e2" stroke-width="0.4">RGB Balance</text>
<text x="1101.5" y="412.5" font-size="13" text-anchor="middle" fill="#e2e2e2" textLength="23.0" lengthAdjust="spacingAndGlyphs" stroke="#e2e2e2" stroke-width="0.4">100</text>
<text x="867.0" y="453.0" font-size="28.4" fill="#f0f0f0" textLength="267.0" lengthAdjust="spacingAndGlyphs" stroke="#f0f0f0" stroke-width="0.55">Contrast Ratio: 1741</text>
<rect x="1226.60" y="85.00" width="383.40" height="307.50" fill="#232323"/>
<line x1="1226.60" y1="392.50" x2="1610.00" y2="392.50" stroke="#8a8a8a" stroke-width="1"/>
<line x1="1221.10" y1="392.50" x2="1226.60" y2="392.50" stroke="#c4c4c4" stroke-width="1"/>
<text x="1220.8" y="397.5" font-size="13.4" text-anchor="end" fill="#e2e2e2" textLength="19.2" lengthAdjust="spacingAndGlyphs" stroke="#e2e2e2" stroke-width="0.4">1,8</text>
<line x1="1226.60" y1="331.50" x2="1610.00" y2="331.50" stroke="#8a8a8a" stroke-width="1"/>
<line x1="1221.10" y1="331.50" x2="1226.60" y2="331.50" stroke="#c4c4c4" stroke-width="1"/>
<text x="1220.8" y="336.0" font-size="13.4" text-anchor="end" fill="#e2e2e2" textLength="7.7" lengthAdjust="spacingAndGlyphs" stroke="#e2e2e2" stroke-width="0.4">2</text>
<line x1="1226.60" y1="269.50" x2="1610.00" y2="269.50" stroke="#8a8a8a" stroke-width="1"/>
<line x1="1221.10" y1="269.50" x2="1226.60" y2="269.50" stroke="#c4c4c4" stroke-width="1"/>
<text x="1220.8" y="274.5" font-size="13.4" text-anchor="end" fill="#e2e2e2" textLength="19.2" lengthAdjust="spacingAndGlyphs" stroke="#e2e2e2" stroke-width="0.4">2,2</text>
<line x1="1226.60" y1="208.50" x2="1610.00" y2="208.50" stroke="#8a8a8a" stroke-width="1"/>
<line x1="1221.10" y1="208.50" x2="1226.60" y2="208.50" stroke="#c4c4c4" stroke-width="1"/>
<text x="1220.8" y="213.0" font-size="13.4" text-anchor="end" fill="#e2e2e2" textLength="19.2" lengthAdjust="spacingAndGlyphs" stroke="#e2e2e2" stroke-width="0.4">2,4</text>
<line x1="1226.60" y1="146.50" x2="1610.00" y2="146.50" stroke="#8a8a8a" stroke-width="1"/>
<line x1="1221.10" y1="146.50" x2="1226.60" y2="146.50" stroke="#c4c4c4" stroke-width="1"/>
<text x="1220.8" y="151.5" font-size="13.4" text-anchor="end" fill="#e2e2e2" textLength="19.2" lengthAdjust="spacingAndGlyphs" stroke="#e2e2e2" stroke-width="0.4">2,6</text>
<line x1="1226.60" y1="85.50" x2="1610.00" y2="85.50" stroke="#8a8a8a" stroke-width="1"/>
<line x1="1221.10" y1="85.50" x2="1226.60" y2="85.50" stroke="#c4c4c4" stroke-width="1"/>
<text x="1220.8" y="90.0" font-size="13.4" text-anchor="end" fill="#e2e2e2" textLength="19.2" lengthAdjust="spacingAndGlyphs" stroke="#e2e2e2" stroke-width="0.4">2,8</text>
<rect x="1226.60" y="85.00" width="383.40" height="307.50" fill="none" stroke="#8a8a8a" stroke-width="1"/>
<line x1="1226.60" y1="83.50" x2="1610.00" y2="83.50" stroke="#9a9a9a" stroke-width="1"/>
<line x1="1226.50" y1="392.50" x2="1226.50" y2="397.90" stroke="#e2e2e2" stroke-width="1.25"/>
<text x="1226.6" y="412.5" font-size="13" text-anchor="middle" fill="#e2e2e2" textLength="7.7" lengthAdjust="spacingAndGlyphs" stroke="#e2e2e2" stroke-width="0.4">0</text>
<line x1="1303.50" y1="392.50" x2="1303.50" y2="397.90" stroke="#e2e2e2" stroke-width="1.25"/>
<text x="1303.3" y="412.5" font-size="13" text-anchor="middle" fill="#e2e2e2" textLength="15.4" lengthAdjust="spacingAndGlyphs" stroke="#e2e2e2" stroke-width="0.4">20</text>
<line x1="1379.50" y1="392.50" x2="1379.50" y2="397.90" stroke="#e2e2e2" stroke-width="1.25"/>
<text x="1380.0" y="412.5" font-size="13" text-anchor="middle" fill="#e2e2e2" textLength="15.4" lengthAdjust="spacingAndGlyphs" stroke="#e2e2e2" stroke-width="0.4">40</text>
<line x1="1456.50" y1="392.50" x2="1456.50" y2="397.90" stroke="#e2e2e2" stroke-width="1.25"/>
<text x="1456.6" y="412.5" font-size="13" text-anchor="middle" fill="#e2e2e2" textLength="15.4" lengthAdjust="spacingAndGlyphs" stroke="#e2e2e2" stroke-width="0.4">60</text>
<line x1="1533.50" y1="392.50" x2="1533.50" y2="397.90" stroke="#e2e2e2" stroke-width="1.25"/>
<text x="1533.3" y="412.5" font-size="13" text-anchor="middle" fill="#e2e2e2" textLength="15.4" lengthAdjust="spacingAndGlyphs" stroke="#e2e2e2" stroke-width="0.4">80</text>
<line x1="1610.50" y1="392.50" x2="1610.50" y2="397.90" stroke="#e2e2e2" stroke-width="1.25"/>
<text x="1610.0" y="412.5" font-size="13" text-anchor="middle" fill="#e2e2e2" textLength="23.0" lengthAdjust="spacingAndGlyphs" stroke="#e2e2e2" stroke-width="0.4">100</text>
<text x="1406.0" y="78.8" font-size="13" text-anchor="middle" fill="#e2e2e2" textLength="106.0" lengthAdjust="spacingAndGlyphs" stroke="#e2e2e2" stroke-width="0.4">Gamma Log/Log</text>
<polyline points="1226.6,553.1 1245.8,299.5 1264.9,283.0 1284.1,282.5 1303.3,282.2 1322.4,284.5 1341.6,284.1 1360.8,295.1 1380.0,297.8 1399.1,298.3 1418.3,311.4 1437.5,315.6 1456.6,324.9 1475.8,334.1 1495.0,324.9 1514.2,321.8 1533.3,314.1 1552.5,318.7 1571.7,306.4 1590.8,289.5 1610.0,244.9" fill="none" stroke="#868686" stroke-width="2.6" stroke-linejoin="round" clip-path="url(#gclip)"/>
<polyline points="1238.1,410.3 1240.0,398.6 1241.9,388.6 1243.9,380.0 1245.8,372.4 1247.7,365.7 1249.6,359.7 1251.5,354.2 1253.4,349.3 1255.4,344.8 1257.3,340.7 1259.2,336.9 1261.1,333.4 1263.0,330.1 1264.9,327.1 1266.9,324.3 1268.8,321.6 1270.7,319.1 1272.6,316.8 1274.5,314.6 1276.4,312.5 1278.4,310.5 1280.3,308.6 1282.2,306.8 1284.1,305.1 1286.0,303.5 1287.9,302.0 1289.9,300.5 1291.8,299.1 1293.7,297.7 1295.6,296.4 1297.5,295.2 1299.4,294.0 1301.4,292.8 1303.3,291.7 1305.2,290.6 1307.1,289.6 1309.0,288.6 1310.9,287.7 1312.9,286.7 1314.8,285.8 1316.7,285.0 1318.6,284.1 1320.5,283.3 1322.4,282.5 1324.4,281.8 1326.3,281.0 1328.2,280.3 1330.1,279.6 1332.0,278.9 1334.0,278.2 1335.9,277.6 1337.8,277.0 1339.7,276.4 1341.6,275.8 1343.5,275.2 1345.5,274.6 1347.4,274.1 1349.3,273.5 1351.2,273.0 1353.1,272.5 1355.0,272.0 1357.0,271.5 1358.9,271.0 1360.8,270.5 1362.7,270.1 1364.6,269.6 1366.5,269.2 1368.5,268.8 1370.4,268.3 1372.3,267.9 1374.2,267.5 1376.1,267.1 1378.0,266.7 1380.0,266.3 1381.9,266.0 1383.8,265.6 1385.7,265.2 1387.6,264.9 1389.5,264.5 1391.5,264.2 1393.4,263.9 1395.3,263.5 1397.2,263.2 1399.1,262.9 1401.0,262.6 1403.0,262.3 1404.9,262.0 1406.8,261.7 1408.7,261.4 1410.6,261.1 1412.5,260.8 1414.5,260.5 1416.4,260.3 1418.3,260.0 1420.2,259.7 1422.1,259.5 1424.1,259.2 1426.0,259.0 1427.9,258.7 1429.8,258.5 1431.7,258.2 1433.6,258.0 1435.6,257.7 1437.5,257.5 1439.4,257.3 1441.3,257.1 1443.2,256.8 1445.1,256.6 1447.1,256.4 1449.0,256.2 1450.9,256.0 1452.8,255.8 1454.7,255.6 1456.6,255.4 1458.6,255.2 1460.5,255.0 1462.4,254.8 1464.3,254.6 1466.2,254.4 1468.1,254.2 1470.1,254.0 1472.0,253.8 1473.9,253.6 1475.8,253.5 1477.7,253.3 1479.6,253.1 1481.6,252.9 1483.5,252.8 1485.4,252.6 1487.3,252.4 1489.2,252.3 1491.1,252.1 1493.1,252.0 1495.0,251.8 1496.9,251.6 1498.8,251.5 1500.7,251.3 1502.6,251.2 1504.6,251.0 1506.5,250.9 1508.4,250.7 1510.3,250.6 1512.2,250.4 1514.2,250.3 1516.1,250.1 1518.0,250.0 1519.9,249.9 1521.8,249.7 1523.7,249.6 1525.7,249.5 1527.6,249.3 1529.5,249.2 1531.4,249.1 1533.3,248.9 1535.2,248.8 1537.2,248.7 1539.1,248.6 1541.0,248.4 1542.9,248.3 1544.8,248.2 1546.7,248.1 1548.7,247.9 1550.6,247.8 1552.5,247.7 1554.4,247.6 1556.3,247.5 1558.2,247.4 1560.2,247.2 1562.1,247.1 1564.0,247.0 1565.9,246.9 1567.8,246.8 1569.7,246.7 1571.7,246.6 1573.6,246.5 1575.5,246.4 1577.4,246.3 1579.3,246.2 1581.2,246.1 1583.2,246.0 1585.1,245.9 1587.0,245.7 1588.9,245.6 1590.8,245.5 1592.7,245.5 1594.7,245.4 1596.6,245.3 1598.5,245.2 1600.4,245.1 1602.3,245.0 1604.2,244.9 1606.2,244.8 1608.1,244.7 1610.0,244.6" fill="none" stroke="#ffff00" stroke-width="2.8" stroke-linejoin="round" clip-path="url(#gclip)"/>
<text x="1253.5" y="453.0" font-size="28.4" fill="#f0f0f0" textLength="305.0" lengthAdjust="spacingAndGlyphs" stroke="#f0f0f0" stroke-width="0.55">Average Gamma: 2,084</text>
<rect x="24.00" y="472.00" width="1612.00" height="127.00" fill="#000000"/>
<rect x="115.50" y="472.00" width="1510.00" height="127.00" fill="#020202"/>
<line x1="115.50" y1="472.00" x2="115.50" y2="599.00" stroke="#161616" stroke-width="1"/>
<line x1="1625.50" y1="472.00" x2="1625.50" y2="599.00" stroke="#161616" stroke-width="1"/>
<rect x="133.50" y="478.50" width="60.00" height="98.00" fill="#000000"/>
<rect x="133.50" y="478.50" width="60.00" height="47.50" fill="#060203"/>
<rect x="133.50" y="478.50" width="60.00" height="98.00" fill="none" stroke="#ffffff" stroke-width="1"/>
<text x="163.8" y="591.0" font-size="11.5" text-anchor="middle" font-weight="bold" fill="#ffffff">0</text>
<rect x="204.50" y="478.50" width="60.00" height="98.00" fill="#0d0d0d"/>
<rect x="204.50" y="478.50" width="60.00" height="47.50" fill="#0b090a"/>
<rect x="204.50" y="478.50" width="60.00" height="98.00" fill="none" stroke="#ffffff" stroke-width="1"/>
<text x="234.8" y="591.0" font-size="11.5" text-anchor="middle" font-weight="bold" fill="#ffffff">5</text>
<rect x="275.50" y="478.50" width="60.00" height="98.00" fill="#1a1a1a"/>
<rect x="275.50" y="478.50" width="60.00" height="47.50" fill="#181617"/>
<rect x="275.50" y="478.50" width="60.00" height="98.00" fill="none" stroke="#ffffff" stroke-width="1"/>
<text x="305.8" y="591.0" font-size="11.5" text-anchor="middle" font-weight="bold" fill="#ffffff">10</text>
<rect x="347.50" y="478.50" width="60.00" height="98.00" fill="#262626"/>
<rect x="347.50" y="478.50" width="60.00" height="47.50" fill="#262425"/>
<rect x="347.50" y="478.50" width="60.00" height="98.00" fill="none" stroke="#ffffff" stroke-width="1"/>
<text x="377.8" y="591.0" font-size="11.5" text-anchor="middle" font-weight="bold" fill="#ffffff">15</text>
<rect x="418.50" y="478.50" width="60.00" height="98.00" fill="#333333"/>
<rect x="418.50" y="478.50" width="60.00" height="47.50" fill="#343233"/>
<rect x="418.50" y="478.50" width="60.00" height="98.00" fill="none" stroke="#ffffff" stroke-width="1"/>
<text x="448.8" y="591.0" font-size="11.5" text-anchor="middle" font-weight="bold" fill="#ffffff">20</text>
<rect x="489.50" y="478.50" width="60.00" height="98.00" fill="#404040"/>
<rect x="489.50" y="478.50" width="60.00" height="47.50" fill="#3e4140"/>
<rect x="489.50" y="478.50" width="60.00" height="98.00" fill="none" stroke="#ffffff" stroke-width="1"/>
<text x="519.8" y="591.0" font-size="11.5" text-anchor="middle" font-weight="bold" fill="#ffffff">25</text>
<rect x="560.50" y="478.50" width="60.00" height="98.00" fill="#4c4c4c"/>
<rect x="560.50" y="478.50" width="60.00" height="47.50" fill="#4c4e4e"/>
<rect x="560.50" y="478.50" width="60.00" height="98.00" fill="none" stroke="#ffffff" stroke-width="1"/>
<text x="590.8" y="591.0" font-size="11.5" text-anchor="middle" font-weight="bold" fill="#ffffff">30</text>
<rect x="631.50" y="478.50" width="60.00" height="98.00" fill="#595959"/>
<rect x="631.50" y="478.50" width="60.00" height="47.50" fill="#5b5e5d"/>
<rect x="631.50" y="478.50" width="60.00" height="98.00" fill="none" stroke="#ffffff" stroke-width="1"/>
<text x="661.8" y="591.0" font-size="11.5" text-anchor="middle" font-weight="bold" fill="#ffffff">35</text>
<rect x="702.50" y="478.50" width="60.00" height="98.00" fill="#666666"/>
<rect x="702.50" y="478.50" width="60.00" height="47.50" fill="#696b6b"/>
<rect x="702.50" y="478.50" width="60.00" height="98.00" fill="none" stroke="#ffffff" stroke-width="1"/>
<text x="732.8" y="591.0" font-size="11.5" text-anchor="middle" font-weight="bold" fill="#ffffff">40</text>
<rect x="774.50" y="478.50" width="60.00" height="98.00" fill="#737373"/>
<rect x="774.50" y="478.50" width="60.00" height="47.50" fill="#767978"/>
<rect x="774.50" y="478.50" width="60.00" height="98.00" fill="none" stroke="#ffffff" stroke-width="1"/>
<text x="804.8" y="591.0" font-size="11.5" text-anchor="middle" font-weight="bold" fill="#ffffff">45</text>
<rect x="845.50" y="478.50" width="60.00" height="98.00" fill="#7f7f7f"/>
<rect x="845.50" y="478.50" width="60.00" height="47.50" fill="#848786"/>
<rect x="845.50" y="478.50" width="60.00" height="98.00" fill="none" stroke="#ffffff" stroke-width="1"/>
<text x="875.8" y="591.0" font-size="11.5" text-anchor="middle" font-weight="bold" fill="#ffffff">50</text>
<rect x="916.50" y="478.50" width="60.00" height="98.00" fill="#8c8c8c"/>
<rect x="916.50" y="478.50" width="60.00" height="47.50" fill="#929494"/>
<rect x="916.50" y="478.50" width="60.00" height="98.00" fill="none" stroke="#ffffff" stroke-width="1"/>
<text x="946.8" y="591.0" font-size="11.5" text-anchor="middle" font-weight="bold" fill="#ffffff">55</text>
<rect x="987.50" y="478.50" width="60.00" height="98.00" fill="#999999"/>
<rect x="987.50" y="478.50" width="60.00" height="47.50" fill="#9fa2a1"/>
<rect x="987.50" y="478.50" width="60.00" height="98.00" fill="none" stroke="#ffffff" stroke-width="1"/>
<text x="1017.8" y="591.0" font-size="11.5" text-anchor="middle" font-weight="bold" fill="#ffffff">60</text>
<rect x="1058.50" y="478.50" width="60.00" height="98.00" fill="#a6a6a6"/>
<rect x="1058.50" y="478.50" width="60.00" height="47.50" fill="#adafaf"/>
<rect x="1058.50" y="478.50" width="60.00" height="98.00" fill="none" stroke="#ffffff" stroke-width="1"/>
<text x="1088.8" y="591.0" font-size="11.5" text-anchor="middle" font-weight="bold" fill="#ffffff">65</text>
<rect x="1130.50" y="478.50" width="60.00" height="98.00" fill="#b2b2b2"/>
<rect x="1130.50" y="478.50" width="60.00" height="47.50" fill="#b9bcbb"/>
<rect x="1130.50" y="478.50" width="60.00" height="98.00" fill="none" stroke="#ffffff" stroke-width="1"/>
<text x="1160.8" y="591.0" font-size="11.5" text-anchor="middle" font-weight="bold" fill="#ffffff">70</text>
<rect x="1201.50" y="478.50" width="60.00" height="98.00" fill="#bfbfbf"/>
<rect x="1201.50" y="478.50" width="60.00" height="47.50" fill="#c5c8c7"/>
<rect x="1201.50" y="478.50" width="60.00" height="98.00" fill="none" stroke="#ffffff" stroke-width="1"/>
<text x="1231.8" y="591.0" font-size="11.5" text-anchor="middle" font-weight="bold" fill="#ffffff">75</text>
<rect x="1272.50" y="478.50" width="60.00" height="98.00" fill="#cccccc"/>
<rect x="1272.50" y="478.50" width="60.00" height="47.50" fill="#d2d4d4"/>
<rect x="1272.50" y="478.50" width="60.00" height="98.00" fill="none" stroke="#ffffff" stroke-width="1"/>
<text x="1302.8" y="591.0" font-size="11.5" text-anchor="middle" font-weight="bold" fill="#ffffff">80</text>
<rect x="1343.50" y="478.50" width="60.00" height="98.00" fill="#d9d9d9"/>
<rect x="1343.50" y="478.50" width="60.00" height="47.50" fill="#dee0e0"/>
<rect x="1343.50" y="478.50" width="60.00" height="98.00" fill="none" stroke="#ffffff" stroke-width="1"/>
<text x="1373.8" y="591.0" font-size="11.5" text-anchor="middle" font-weight="bold" fill="#ffffff">85</text>
<rect x="1414.50" y="478.50" width="60.00" height="98.00" fill="#e5e5e5"/>
<rect x="1414.50" y="478.50" width="60.00" height="47.50" fill="#e9ebeb"/>
<rect x="1414.50" y="478.50" width="60.00" height="98.00" fill="none" stroke="#ffffff" stroke-width="1"/>
<text x="1444.8" y="591.0" font-size="11.5" text-anchor="middle" font-weight="bold" fill="#ffffff">90</text>
<rect x="1485.50" y="478.50" width="60.00" height="98.00" fill="#f2f2f2"/>
<rect x="1485.50" y="478.50" width="60.00" height="47.50" fill="#f3f6f5"/>
<rect x="1485.50" y="478.50" width="60.00" height="98.00" fill="none" stroke="#ffffff" stroke-width="1"/>
<text x="1515.8" y="591.0" font-size="11.5" text-anchor="middle" font-weight="bold" fill="#ffffff">95</text>
<rect x="1557.50" y="478.50" width="60.00" height="98.00" fill="#ffffff"/>
<rect x="1557.50" y="478.50" width="60.00" height="47.50" fill="#fcfffe"/>
<rect x="1557.50" y="478.50" width="60.00" height="98.00" fill="none" stroke="#ffffff" stroke-width="1"/>
<text x="1587.8" y="591.0" font-size="11.5" text-anchor="middle" font-weight="bold" fill="#ffffff">100</text>
<text transform="translate(127.8 516.3) rotate(-90)" font-size="11.5" font-weight="bold" fill="#ffffff" textLength="33.5" lengthAdjust="spacingAndGlyphs">Actual</text>
<text transform="translate(127.8 572.3) rotate(-90)" font-size="11.5" font-weight="bold" fill="#ffffff" textLength="33.5" lengthAdjust="spacingAndGlyphs">Target</text>
<text y="663.7" font-size="27" fill="#f0f0f0" stroke="#f0f0f0" stroke-width="0.5"><tspan x="42.3" textLength="99.5" lengthAdjust="spacingAndGlyphs">Current</tspan> <tspan x="150.6" textLength="105.5" lengthAdjust="spacingAndGlyphs">Reading</tspan></text>
<text x="43.7" y="704.7" font-size="23.6" fill="#f0f0f0" textLength="98.5" lengthAdjust="spacingAndGlyphs" stroke="#f0f0f0" stroke-width="0.45">x: 0,3103</text>
<text x="189.0" y="704.7" font-size="23.6" fill="#f0f0f0" textLength="98.7" lengthAdjust="spacingAndGlyphs" stroke="#f0f0f0" stroke-width="0.45">y: 0,3305</text>
<text x="43.7" y="737.5" font-size="23.6" fill="#f0f0f0" textLength="108.0" lengthAdjust="spacingAndGlyphs" stroke="#f0f0f0" stroke-width="0.45">u': 0,1956</text>
<text x="189.0" y="737.5" font-size="23.6" fill="#f0f0f0" textLength="104.0" lengthAdjust="spacingAndGlyphs" stroke="#f0f0f0" stroke-width="0.45">v': 0,4687</text>
<text x="43.7" y="770.5" font-size="23.6" fill="#f0f0f0" textLength="181.5" lengthAdjust="spacingAndGlyphs" stroke="#f0f0f0" stroke-width="0.45">cd/m²: 369,1539</text>
<text x="43.7" y="803.3" font-size="23.6" fill="#f0f0f0" textLength="149.5" lengthAdjust="spacingAndGlyphs" stroke="#f0f0f0" stroke-width="0.45">ΔE 2000: 2,86</text>
<text x="481.0" y="630.5" font-size="13.5" text-anchor="middle" fill="#e2e2e2" textLength="73.5" lengthAdjust="spacingAndGlyphs" stroke="#e2e2e2" stroke-width="0.5">CIE 1931 xy</text>
<line x1="386.2" y1="796.5" x2="386.2" y2="801.5" stroke="#dcdcdc" stroke-width="1.5"/>
<text x="386.2" y="816.8" font-size="14" text-anchor="middle" fill="#e2e2e2" textLength="28.0" lengthAdjust="spacingAndGlyphs" stroke="#e2e2e2" stroke-width="0.55">0,29</text>
<line x1="435.0" y1="796.5" x2="435.0" y2="801.5" stroke="#dcdcdc" stroke-width="1.5"/>
<text x="435.0" y="816.8" font-size="14" text-anchor="middle" fill="#e2e2e2" textLength="19.8" lengthAdjust="spacingAndGlyphs" stroke="#e2e2e2" stroke-width="0.55">0,3</text>
<line x1="483.9" y1="796.5" x2="483.9" y2="801.5" stroke="#dcdcdc" stroke-width="1.5"/>
<text x="483.9" y="816.8" font-size="14" text-anchor="middle" fill="#e2e2e2" textLength="28.0" lengthAdjust="spacingAndGlyphs" stroke="#e2e2e2" stroke-width="0.55">0,31</text>
<line x1="532.8" y1="796.5" x2="532.8" y2="801.5" stroke="#dcdcdc" stroke-width="1.5"/>
<text x="532.8" y="816.8" font-size="14" text-anchor="middle" fill="#e2e2e2" textLength="28.0" lengthAdjust="spacingAndGlyphs" stroke="#e2e2e2" stroke-width="0.55">0,32</text>
<line x1="581.6" y1="796.5" x2="581.6" y2="801.5" stroke="#dcdcdc" stroke-width="1.5"/>
<text x="581.6" y="816.8" font-size="14" text-anchor="middle" fill="#e2e2e2" textLength="28.0" lengthAdjust="spacingAndGlyphs" stroke="#e2e2e2" stroke-width="0.55">0,33</text>
<line x1="369.5" y1="681.8" x2="375.0" y2="681.8" stroke="#dcdcdc" stroke-width="1.6"/>
<text x="369.8" y="686.4" font-size="14" text-anchor="end" fill="#e2e2e2" textLength="28.0" lengthAdjust="spacingAndGlyphs" stroke="#e2e2e2" stroke-width="0.55">0,34</text>
<line x1="369.5" y1="746.5" x2="375.0" y2="746.5" stroke="#dcdcdc" stroke-width="1.6"/>
<text x="369.8" y="751.1" font-size="14" text-anchor="end" fill="#e2e2e2" textLength="28.0" lengthAdjust="spacingAndGlyphs" stroke="#e2e2e2" stroke-width="0.55">0,32</text>
<path d="M406 796.5 Q512 724 619.5 661.5" fill="none" stroke="#000" stroke-width="2.7" clip-path="url(#cclip)"/>
<rect x="490.80" y="708.70" width="12.60" height="12.60" fill="#ffffff" stroke="#000000" stroke-width="2"/>
<circle cx="612.4" cy="710.7" r="4.1" fill="#111111" stroke="#090909" stroke-width="0.6"/>
<circle cx="536.2" cy="704.6" r="4.1" fill="#1e1e1e" stroke="#121212" stroke-width="0.6"/>
<circle cx="520.0" cy="714.3" r="4.1" fill="#2a2a2a" stroke="#1b1b1b" stroke-width="0.6"/>
<circle cx="501.5" cy="706.9" r="4.1" fill="#373737" stroke="#242424" stroke-width="0.6"/>
<circle cx="486.8" cy="710.1" r="4.1" fill="#444444" stroke="#2d2d2d" stroke-width="0.6"/>
<circle cx="487.8" cy="710.4" r="4.1" fill="#505050" stroke="#363636" stroke-width="0.6"/>
<circle cx="488.3" cy="713.6" r="4.1" fill="#5d5d5d" stroke="#3e3e3e" stroke-width="0.6"/>
<circle cx="483.4" cy="716.6" r="4.1" fill="#6a6a6a" stroke="#474747" stroke-width="0.6"/>
<circle cx="479.5" cy="720.1" r="4.1" fill="#777777" stroke="#505050" stroke-width="0.6"/>
<circle cx="482.4" cy="718.5" r="4.1" fill="#848484" stroke="#595959" stroke-width="0.6"/>
<circle cx="481.5" cy="718.2" r="4.1" fill="#909090" stroke="#626262" stroke-width="0.6"/>
<circle cx="482.5" cy="717.3" r="4.1" fill="#9d9d9d" stroke="#6b6b6b" stroke-width="0.6"/>
<circle cx="483.3" cy="716.6" r="4.1" fill="#aaaaaa" stroke="#747474" stroke-width="0.6"/>
<circle cx="483.8" cy="715.6" r="4.1" fill="#b6b6b6" stroke="#000000" stroke-width="0.8"/>
<circle cx="484.2" cy="714.6" r="4.1" fill="#c3c3c3" stroke="#000000" stroke-width="0.8"/>
<circle cx="484.6" cy="712.8" r="4.1" fill="#d0d0d0" stroke="#000000" stroke-width="0.8"/>
<circle cx="483.9" cy="710.2" r="4.1" fill="#dddddd" stroke="#000000" stroke-width="0.8"/>
<circle cx="487.9" cy="708.9" r="4.1" fill="#e9e9e9" stroke="#000000" stroke-width="0.8"/>
<circle cx="488.3" cy="711.0" r="4.1" fill="#f6f6f6" stroke="#000000" stroke-width="0.8"/>
<circle cx="485.4" cy="710.6" r="4.1" fill="#ffffff" stroke="#000000" stroke-width="0.8"/>
<rect x="375.00" y="635.50" width="244.50" height="161.00" fill="none" stroke="#a8a8a8" stroke-width="1"/>
<rect x="631.00" y="608.00" width="998.00" height="27.00" fill="url(#thead)"/>
<rect x="631.00" y="608.00" width="13.00" height="27.00" fill="#000000"/>
<g clip-path="url(#tclip)">
<text x="773.7" y="626.7" font-size="14.6" font-weight="bold" fill="#f0f0f0">0</text>
<text x="854.5" y="626.7" font-size="14.6" font-weight="bold" fill="#f0f0f0">5</text>
<text x="935.2" y="626.7" font-size="14.6" font-weight="bold" fill="#f0f0f0">10</text>
<text x="1016.0" y="626.7" font-size="14.6" font-weight="bold" fill="#f0f0f0">15</text>
<text x="1096.7" y="626.7" font-size="14.6" font-weight="bold" fill="#f0f0f0">20</text>
<text x="1177.5" y="626.7" font-size="14.6" font-weight="bold" fill="#f0f0f0">25</text>
<text x="1258.2" y="626.7" font-size="14.6" font-weight="bold" fill="#f0f0f0">30</text>
<text x="1339.0" y="626.7" font-size="14.6" font-weight="bold" fill="#f0f0f0">35</text>
<text x="1419.7" y="626.7" font-size="14.6" font-weight="bold" fill="#f0f0f0">40</text>
<text x="1500.5" y="626.7" font-size="14.6" font-weight="bold" fill="#f0f0f0">45</text>
<text x="1581.2" y="626.7" font-size="14.6" font-weight="bold" fill="#f0f0f0">50</text>
<rect x="631.00" y="635.00" width="998.00" height="25.00" fill="#404040"/>
<rect x="631.00" y="635.00" width="13.00" height="25.00" fill="url(#rhd)"/>
<text x="647.5" y="653.6" font-size="15.3" fill="#f4f4f4" textLength="54.0" lengthAdjust="spacingAndGlyphs" stroke="#f4f4f4" stroke-width="0.3">x: CIE31</text>
<text x="773.7" y="653.6" font-size="15.3" fill="#f4f4f4" textLength="46.5" lengthAdjust="spacingAndGlyphs" stroke="#f4f4f4" stroke-width="0.3">0,3904</text>
<text x="854.5" y="653.6" font-size="15.3" fill="#f4f4f4" textLength="46.5" lengthAdjust="spacingAndGlyphs" stroke="#f4f4f4" stroke-width="0.3">0,3363</text>
<text x="935.2" y="653.6" font-size="15.3" fill="#f4f4f4" textLength="46.5" lengthAdjust="spacingAndGlyphs" stroke="#f4f4f4" stroke-width="0.3">0,3207</text>
<text x="1016.0" y="653.6" font-size="15.3" fill="#f4f4f4" textLength="46.5" lengthAdjust="spacingAndGlyphs" stroke="#f4f4f4" stroke-width="0.3">0,3174</text>
<text x="1096.7" y="653.6" font-size="15.3" fill="#f4f4f4" textLength="46.5" lengthAdjust="spacingAndGlyphs" stroke="#f4f4f4" stroke-width="0.3">0,3136</text>
<text x="1177.5" y="653.6" font-size="15.3" fill="#f4f4f4" textLength="46.5" lengthAdjust="spacingAndGlyphs" stroke="#f4f4f4" stroke-width="0.3">0,3106</text>
<text x="1258.2" y="653.6" font-size="15.3" fill="#f4f4f4" textLength="46.5" lengthAdjust="spacingAndGlyphs" stroke="#f4f4f4" stroke-width="0.3">0,3108</text>
<text x="1339.0" y="653.6" font-size="15.3" fill="#f4f4f4" textLength="46.5" lengthAdjust="spacingAndGlyphs" stroke="#f4f4f4" stroke-width="0.3">0,3109</text>
<text x="1419.7" y="653.6" font-size="15.3" fill="#f4f4f4" textLength="46.5" lengthAdjust="spacingAndGlyphs" stroke="#f4f4f4" stroke-width="0.3">0,3099</text>
<text x="1500.5" y="653.6" font-size="15.3" fill="#f4f4f4" textLength="46.5" lengthAdjust="spacingAndGlyphs" stroke="#f4f4f4" stroke-width="0.3">0,3091</text>
<text x="1581.2" y="653.6" font-size="15.3" fill="#f4f4f4" textLength="46.5" lengthAdjust="spacingAndGlyphs" stroke="#f4f4f4" stroke-width="0.3">0,3097</text>
<rect x="631.00" y="660.00" width="998.00" height="25.00" fill="#7e7e7e"/>
<rect x="631.00" y="660.00" width="13.00" height="25.00" fill="url(#rhd)"/>
<text x="647.5" y="678.5" font-size="15.3" fill="#e6e6e6" textLength="54.0" lengthAdjust="spacingAndGlyphs" stroke="#e6e6e6" stroke-width="0.3">y: CIE31</text>
<text x="773.7" y="678.5" font-size="15.3" fill="#e6e6e6" textLength="46.5" lengthAdjust="spacingAndGlyphs" stroke="#e6e6e6" stroke-width="0.3">0,3385</text>
<text x="854.5" y="678.5" font-size="15.3" fill="#e6e6e6" textLength="46.5" lengthAdjust="spacingAndGlyphs" stroke="#e6e6e6" stroke-width="0.3">0,3305</text>
<text x="935.2" y="678.5" font-size="15.3" fill="#e6e6e6" textLength="46.5" lengthAdjust="spacingAndGlyphs" stroke="#e6e6e6" stroke-width="0.3">0,3324</text>
<text x="1016.0" y="678.5" font-size="15.3" fill="#e6e6e6" textLength="46.5" lengthAdjust="spacingAndGlyphs" stroke="#e6e6e6" stroke-width="0.3">0,3294</text>
<text x="1096.7" y="678.5" font-size="15.3" fill="#e6e6e6" textLength="46.5" lengthAdjust="spacingAndGlyphs" stroke="#e6e6e6" stroke-width="0.3">0,3317</text>
<text x="1177.5" y="678.5" font-size="15.3" fill="#e6e6e6" textLength="46.5" lengthAdjust="spacingAndGlyphs" stroke="#e6e6e6" stroke-width="0.3">0,3307</text>
<text x="1258.2" y="678.5" font-size="15.3" fill="#e6e6e6" textLength="46.5" lengthAdjust="spacingAndGlyphs" stroke="#e6e6e6" stroke-width="0.3">0,3306</text>
<text x="1339.0" y="678.5" font-size="15.3" fill="#e6e6e6" textLength="46.5" lengthAdjust="spacingAndGlyphs" stroke="#e6e6e6" stroke-width="0.3">0,3296</text>
<text x="1419.7" y="678.5" font-size="15.3" fill="#e6e6e6" textLength="46.5" lengthAdjust="spacingAndGlyphs" stroke="#e6e6e6" stroke-width="0.3">0,3287</text>
<text x="1500.5" y="678.5" font-size="15.3" fill="#e6e6e6" textLength="46.5" lengthAdjust="spacingAndGlyphs" stroke="#e6e6e6" stroke-width="0.3">0,3276</text>
<text x="1581.2" y="678.5" font-size="15.3" fill="#e6e6e6" textLength="46.5" lengthAdjust="spacingAndGlyphs" stroke="#e6e6e6" stroke-width="0.3">0,3281</text>
<rect x="631.00" y="685.00" width="998.00" height="25.00" fill="#404040"/>
<rect x="631.00" y="685.00" width="13.00" height="25.00" fill="url(#rhd)"/>
<text x="647.5" y="703.3" font-size="15.3" fill="#f4f4f4" textLength="8.5" lengthAdjust="spacingAndGlyphs" stroke="#f4f4f4" stroke-width="0.3">Y</text>
<text x="773.7" y="703.3" font-size="15.3" fill="#f4f4f4" textLength="46.5" lengthAdjust="spacingAndGlyphs" stroke="#f4f4f4" stroke-width="0.3">0,2120</text>
<text x="854.5" y="703.3" font-size="15.3" fill="#f4f4f4" textLength="46.5" lengthAdjust="spacingAndGlyphs" stroke="#f4f4f4" stroke-width="0.3">0,7176</text>
<text x="935.2" y="703.3" font-size="15.3" fill="#f4f4f4" textLength="46.5" lengthAdjust="spacingAndGlyphs" stroke="#f4f4f4" stroke-width="0.3">2,7171</text>
<text x="1016.0" y="703.3" font-size="15.3" fill="#f4f4f4" textLength="46.5" lengthAdjust="spacingAndGlyphs" stroke="#f4f4f4" stroke-width="0.3">6,1312</text>
<text x="1096.7" y="703.3" font-size="15.3" fill="#f4f4f4" textLength="54.5" lengthAdjust="spacingAndGlyphs" stroke="#f4f4f4" stroke-width="0.3">11,5299</text>
<text x="1177.5" y="703.3" font-size="15.3" fill="#f4f4f4" textLength="54.5" lengthAdjust="spacingAndGlyphs" stroke="#f4f4f4" stroke-width="0.3">19,0012</text>
<text x="1258.2" y="703.3" font-size="15.3" fill="#f4f4f4" textLength="54.5" lengthAdjust="spacingAndGlyphs" stroke="#f4f4f4" stroke-width="0.3">27,4301</text>
<text x="1339.0" y="703.3" font-size="15.3" fill="#f4f4f4" textLength="54.5" lengthAdjust="spacingAndGlyphs" stroke="#f4f4f4" stroke-width="0.3">39,9760</text>
<text x="1419.7" y="703.3" font-size="15.3" fill="#f4f4f4" textLength="54.5" lengthAdjust="spacingAndGlyphs" stroke="#f4f4f4" stroke-width="0.3">53,7468</text>
<text x="1500.5" y="703.3" font-size="15.3" fill="#f4f4f4" textLength="54.5" lengthAdjust="spacingAndGlyphs" stroke="#f4f4f4" stroke-width="0.3">69,2613</text>
<text x="1581.2" y="703.3" font-size="15.3" fill="#f4f4f4" textLength="54.5" lengthAdjust="spacingAndGlyphs" stroke="#f4f4f4" stroke-width="0.3">88,8392</text>
<rect x="631.00" y="710.00" width="998.00" height="25.00" fill="#7e7e7e"/>
<rect x="631.00" y="710.00" width="13.00" height="25.00" fill="url(#rhd)"/>
<text x="647.5" y="728.2" font-size="15.3" fill="#e6e6e6" textLength="56.0" lengthAdjust="spacingAndGlyphs" stroke="#e6e6e6" stroke-width="0.3">Target Y</text>
<text x="773.7" y="728.2" font-size="15.3" fill="#e6e6e6" textLength="46.5" lengthAdjust="spacingAndGlyphs" stroke="#e6e6e6" stroke-width="0.3">0,0000</text>
<text x="854.5" y="728.2" font-size="15.3" fill="#e6e6e6" textLength="46.5" lengthAdjust="spacingAndGlyphs" stroke="#e6e6e6" stroke-width="0.3">1,4857</text>
<text x="935.2" y="728.2" font-size="15.3" fill="#e6e6e6" textLength="46.5" lengthAdjust="spacingAndGlyphs" stroke="#e6e6e6" stroke-width="0.3">3,8133</text>
<text x="1016.0" y="728.2" font-size="15.3" fill="#e6e6e6" textLength="46.5" lengthAdjust="spacingAndGlyphs" stroke="#e6e6e6" stroke-width="0.3">7,1551</text>
<text x="1096.7" y="728.2" font-size="15.3" fill="#e6e6e6" textLength="54.5" lengthAdjust="spacingAndGlyphs" stroke="#e6e6e6" stroke-width="0.3">12,2208</text>
<text x="1177.5" y="728.2" font-size="15.3" fill="#e6e6e6" textLength="54.5" lengthAdjust="spacingAndGlyphs" stroke="#e6e6e6" stroke-width="0.3">18,9263</text>
<text x="1258.2" y="728.2" font-size="15.3" fill="#e6e6e6" textLength="54.5" lengthAdjust="spacingAndGlyphs" stroke="#e6e6e6" stroke-width="0.3">26,6794</text>
<text x="1339.0" y="728.2" font-size="15.3" fill="#e6e6e6" textLength="54.5" lengthAdjust="spacingAndGlyphs" stroke="#e6e6e6" stroke-width="0.3">36,8780</text>
<text x="1419.7" y="728.2" font-size="15.3" fill="#e6e6e6" textLength="54.5" lengthAdjust="spacingAndGlyphs" stroke="#e6e6e6" stroke-width="0.3">49,0489</text>
<text x="1500.5" y="728.2" font-size="15.3" fill="#e6e6e6" textLength="54.5" lengthAdjust="spacingAndGlyphs" stroke="#e6e6e6" stroke-width="0.3">63,2881</text>
<text x="1581.2" y="728.2" font-size="15.3" fill="#e6e6e6" textLength="54.5" lengthAdjust="spacingAndGlyphs" stroke="#e6e6e6" stroke-width="0.3">79,6857</text>
<rect x="631.00" y="735.00" width="998.00" height="25.00" fill="#404040"/>
<rect x="631.00" y="735.00" width="13.00" height="25.00" fill="url(#rhd)"/>
<text x="647.5" y="753.0" font-size="15.3" fill="#f4f4f4" textLength="117.0" lengthAdjust="spacingAndGlyphs" stroke="#f4f4f4" stroke-width="0.3">Gamma Log/Log</text>
<text x="773.7" y="753.0" font-size="15.3" fill="#f4f4f4" textLength="46.5" lengthAdjust="spacingAndGlyphs" stroke="#f4f4f4" stroke-width="0.3">1,2778</text>
<text x="854.5" y="753.0" font-size="15.3" fill="#f4f4f4" textLength="46.5" lengthAdjust="spacingAndGlyphs" stroke="#f4f4f4" stroke-width="0.3">2,0976</text>
<text x="935.2" y="753.0" font-size="15.3" fill="#f4f4f4" textLength="46.5" lengthAdjust="spacingAndGlyphs" stroke="#f4f4f4" stroke-width="0.3">2,1512</text>
<text x="1016.0" y="753.0" font-size="15.3" fill="#f4f4f4" textLength="46.5" lengthAdjust="spacingAndGlyphs" stroke="#f4f4f4" stroke-width="0.3">2,1526</text>
<text x="1096.7" y="753.0" font-size="15.3" fill="#f4f4f4" textLength="46.5" lengthAdjust="spacingAndGlyphs" stroke="#f4f4f4" stroke-width="0.3">2,1537</text>
<text x="1177.5" y="753.0" font-size="15.3" fill="#f4f4f4" textLength="46.5" lengthAdjust="spacingAndGlyphs" stroke="#f4f4f4" stroke-width="0.3">2,1461</text>
<text x="1258.2" y="753.0" font-size="15.3" fill="#f4f4f4" textLength="46.5" lengthAdjust="spacingAndGlyphs" stroke="#f4f4f4" stroke-width="0.3">2,1475</text>
<text x="1339.0" y="753.0" font-size="15.3" fill="#f4f4f4" textLength="46.5" lengthAdjust="spacingAndGlyphs" stroke="#f4f4f4" stroke-width="0.3">2,1118</text>
<text x="1419.7" y="753.0" font-size="15.3" fill="#f4f4f4" textLength="46.5" lengthAdjust="spacingAndGlyphs" stroke="#f4f4f4" stroke-width="0.3">2,1030</text>
<text x="1500.5" y="753.0" font-size="15.3" fill="#f4f4f4" textLength="46.5" lengthAdjust="spacingAndGlyphs" stroke="#f4f4f4" stroke-width="0.3">2,1013</text>
<text x="1581.2" y="753.0" font-size="15.3" fill="#f4f4f4" textLength="46.5" lengthAdjust="spacingAndGlyphs" stroke="#f4f4f4" stroke-width="0.3">2,0666</text>
<rect x="631.00" y="760.00" width="998.00" height="25.00" fill="#7e7e7e"/>
<rect x="631.00" y="760.00" width="13.00" height="25.00" fill="url(#rhd)"/>
<text x="647.5" y="777.9" font-size="15.3" fill="#e6e6e6" textLength="27.5" lengthAdjust="spacingAndGlyphs" stroke="#e6e6e6" stroke-width="0.3">CCT</text>
<text x="773.7" y="777.9" font-size="15.3" fill="#e6e6e6" textLength="72.0" lengthAdjust="spacingAndGlyphs" stroke="#e6e6e6" stroke-width="0.3">3408,0000</text>
<text x="854.5" y="777.9" font-size="15.3" fill="#e6e6e6" textLength="72.0" lengthAdjust="spacingAndGlyphs" stroke="#e6e6e6" stroke-width="0.3">5317,0000</text>
<text x="935.2" y="777.9" font-size="15.3" fill="#e6e6e6" textLength="72.0" lengthAdjust="spacingAndGlyphs" stroke="#e6e6e6" stroke-width="0.3">6065,0000</text>
<text x="1016.0" y="777.9" font-size="15.3" fill="#e6e6e6" textLength="72.0" lengthAdjust="spacingAndGlyphs" stroke="#e6e6e6" stroke-width="0.3">6247,0000</text>
<text x="1096.7" y="777.9" font-size="15.3" fill="#e6e6e6" textLength="72.0" lengthAdjust="spacingAndGlyphs" stroke="#e6e6e6" stroke-width="0.3">6439,0000</text>
<text x="1177.5" y="777.9" font-size="15.3" fill="#e6e6e6" textLength="72.0" lengthAdjust="spacingAndGlyphs" stroke="#e6e6e6" stroke-width="0.3">6607,0000</text>
<text x="1258.2" y="777.9" font-size="15.3" fill="#e6e6e6" textLength="72.0" lengthAdjust="spacingAndGlyphs" stroke="#e6e6e6" stroke-width="0.3">6598,0000</text>
<text x="1339.0" y="777.9" font-size="15.3" fill="#e6e6e6" textLength="72.0" lengthAdjust="spacingAndGlyphs" stroke="#e6e6e6" stroke-width="0.3">6600,0000</text>
<text x="1419.7" y="777.9" font-size="15.3" fill="#e6e6e6" textLength="72.0" lengthAdjust="spacingAndGlyphs" stroke="#e6e6e6" stroke-width="0.3">6660,0000</text>
<text x="1500.5" y="777.9" font-size="15.3" fill="#e6e6e6" textLength="72.0" lengthAdjust="spacingAndGlyphs" stroke="#e6e6e6" stroke-width="0.3">6718,0000</text>
<text x="1581.2" y="777.9" font-size="15.3" fill="#e6e6e6" textLength="72.0" lengthAdjust="spacingAndGlyphs" stroke="#e6e6e6" stroke-width="0.3">6680,0000</text>
<rect x="631.00" y="785.00" width="998.00" height="25.00" fill="#404040"/>
<rect x="631.00" y="785.00" width="13.00" height="25.00" fill="url(#rhd)"/>
<text x="647.5" y="802.7" font-size="15.3" fill="#f4f4f4" textLength="57.0" lengthAdjust="spacingAndGlyphs" stroke="#f4f4f4" stroke-width="0.3">ΔE 2000</text>
<text x="773.7" y="802.7" font-size="15.3" fill="#f4f4f4" textLength="46.5" lengthAdjust="spacingAndGlyphs" stroke="#f4f4f4" stroke-width="0.3">0,7986</text>
<text x="854.5" y="802.7" font-size="15.3" fill="#f4f4f4" textLength="46.5" lengthAdjust="spacingAndGlyphs" stroke="#f4f4f4" stroke-width="0.3">1,3713</text>
<text x="935.2" y="802.7" font-size="15.3" fill="#f4f4f4" textLength="46.5" lengthAdjust="spacingAndGlyphs" stroke="#f4f4f4" stroke-width="0.3">1,7920</text>
<text x="1016.0" y="802.7" font-size="15.3" fill="#f4f4f4" textLength="46.5" lengthAdjust="spacingAndGlyphs" stroke="#f4f4f4" stroke-width="0.3">1,3690</text>
<text x="1096.7" y="802.7" font-size="15.3" fill="#f4f4f4" textLength="46.5" lengthAdjust="spacingAndGlyphs" stroke="#f4f4f4" stroke-width="0.3">0,7477</text>
<text x="1177.5" y="802.7" font-size="15.3" fill="#f4f4f4" textLength="46.5" lengthAdjust="spacingAndGlyphs" stroke="#f4f4f4" stroke-width="0.3">1,0996</text>
<text x="1258.2" y="802.7" font-size="15.3" fill="#f4f4f4" textLength="46.5" lengthAdjust="spacingAndGlyphs" stroke="#f4f4f4" stroke-width="0.3">1,1960</text>
<text x="1339.0" y="802.7" font-size="15.3" fill="#f4f4f4" textLength="46.5" lengthAdjust="spacingAndGlyphs" stroke="#f4f4f4" stroke-width="0.3">1,5535</text>
<text x="1419.7" y="802.7" font-size="15.3" fill="#f4f4f4" textLength="46.5" lengthAdjust="spacingAndGlyphs" stroke="#f4f4f4" stroke-width="0.3">2,0196</text>
<text x="1500.5" y="802.7" font-size="15.3" fill="#f4f4f4" textLength="46.5" lengthAdjust="spacingAndGlyphs" stroke="#f4f4f4" stroke-width="0.3">2,3174</text>
<text x="1581.2" y="802.7" font-size="15.3" fill="#f4f4f4" textLength="46.5" lengthAdjust="spacingAndGlyphs" stroke="#f4f4f4" stroke-width="0.3">2,7235</text>
</g>
<rect x="644.00" y="810.00" width="985.00" height="15.50" fill="#5c5c5c"/>
<rect x="660.50" y="811.00" width="516.50" height="14.00" fill="#444444" rx="7"/>
<rect x="645.00" y="811.00" width="13.00" height="13.50" fill="#8a8a8a" rx="2"/>
<path d="M654 814 L648.5 817.7 L654 821.4 Z" fill="#3a3a3a"/>
<rect x="1613.50" y="811.00" width="13.00" height="13.50" fill="#8a8a8a" rx="2"/>
<path d="M1617.5 814 L1623 817.7 L1617.5 821.4 Z" fill="#3a3a3a"/>
<rect x="0.00" y="829.00" width="1651.00" height="74.00" fill="#363636"/>
<rect x="-40.00" y="831.00" width="62.50" height="60.00" fill="url(#pbtn)" rx="4"/>
<rect x="-33.50" y="837.50" width="49.00" height="28.50" fill="#0d0d0d" stroke="#141414" stroke-width="1" rx="3.5"/>
<text x="-8.7" y="885.5" font-size="13" text-anchor="middle" font-weight="bold" fill="#262626">5</text>
<rect x="25.00" y="831.00" width="62.50" height="60.00" fill="url(#pbtn)" rx="4"/>
<rect x="31.50" y="837.50" width="49.00" height="28.50" fill="#1a1a1a" stroke="#1e1e1e" stroke-width="1" rx="3.5"/>
<text x="56.3" y="885.5" font-size="13" text-anchor="middle" font-weight="bold" fill="#262626">10</text>
<rect x="90.00" y="831.00" width="62.50" height="60.00" fill="url(#pbtn)" rx="4"/>
<rect x="96.50" y="837.50" width="49.00" height="28.50" fill="#262626" stroke="#292929" stroke-width="1" rx="3.5"/>
<text x="121.3" y="885.5" font-size="13" text-anchor="middle" font-weight="bold" fill="#262626">15</text>
<rect x="155.00" y="831.00" width="62.50" height="60.00" fill="url(#pbtn)" rx="4"/>
<rect x="161.50" y="837.50" width="49.00" height="28.50" fill="#333333" stroke="#333333" stroke-width="1" rx="3.5"/>
<text x="186.3" y="885.5" font-size="13" text-anchor="middle" font-weight="bold" fill="#262626">20</text>
<rect x="220.00" y="831.00" width="62.50" height="60.00" fill="url(#pbtn)" rx="4"/>
<rect x="226.50" y="837.50" width="49.00" height="28.50" fill="#404040" stroke="#3d3d3d" stroke-width="1" rx="3.5"/>
<text x="251.3" y="885.5" font-size="13" text-anchor="middle" font-weight="bold" fill="#262626">25</text>
<rect x="285.00" y="831.00" width="62.50" height="60.00" fill="url(#pbtn)" rx="4"/>
<rect x="291.50" y="837.50" width="49.00" height="28.50" fill="#4c4c4c" stroke="#474747" stroke-width="1" rx="3.5"/>
<text x="316.3" y="885.5" font-size="13" text-anchor="middle" font-weight="bold" fill="#262626">30</text>
<rect x="350.00" y="831.00" width="62.50" height="60.00" fill="url(#pbtn)" rx="4"/>
<rect x="356.50" y="837.50" width="49.00" height="28.50" fill="#595959" stroke="#515151" stroke-width="1" rx="3.5"/>
<text x="381.3" y="885.5" font-size="13" text-anchor="middle" font-weight="bold" fill="#262626">35</text>
<rect x="415.00" y="831.00" width="62.50" height="60.00" fill="url(#pbtn)" rx="4"/>
<rect x="421.50" y="837.50" width="49.00" height="28.50" fill="#666666" stroke="#5c5c5c" stroke-width="1" rx="3.5"/>
<text x="446.3" y="885.5" font-size="13" text-anchor="middle" font-weight="bold" fill="#262626">40</text>
<rect x="480.00" y="831.00" width="62.50" height="60.00" fill="url(#pbtn)" rx="4"/>
<rect x="486.50" y="837.50" width="49.00" height="28.50" fill="#737373" stroke="#666666" stroke-width="1" rx="3.5"/>
<text x="511.3" y="885.5" font-size="13" text-anchor="middle" font-weight="bold" fill="#262626">45</text>
<rect x="545.00" y="831.00" width="62.50" height="60.00" fill="url(#pbtn)" rx="4"/>
<rect x="551.50" y="837.50" width="49.00" height="28.50" fill="#7f7f7f" stroke="#707070" stroke-width="1" rx="3.5"/>
<text x="576.3" y="885.5" font-size="13" text-anchor="middle" font-weight="bold" fill="#262626">50</text>
<rect x="610.00" y="831.00" width="62.50" height="60.00" fill="url(#pbtn)" rx="4"/>
<rect x="616.50" y="837.50" width="49.00" height="28.50" fill="#8c8c8c" stroke="#7a7a7a" stroke-width="1" rx="3.5"/>
<text x="641.3" y="885.5" font-size="13" text-anchor="middle" font-weight="bold" fill="#262626">55</text>
<rect x="675.00" y="831.00" width="62.50" height="60.00" fill="url(#pbtn)" rx="4"/>
<rect x="681.50" y="837.50" width="49.00" height="28.50" fill="#999999" stroke="#848484" stroke-width="1" rx="3.5"/>
<text x="706.3" y="885.5" font-size="13" text-anchor="middle" font-weight="bold" fill="#262626">60</text>
<rect x="740.00" y="831.00" width="62.50" height="60.00" fill="url(#pbtn)" rx="4"/>
<rect x="746.50" y="837.50" width="49.00" height="28.50" fill="#a6a6a6" stroke="#8f8f8f" stroke-width="1" rx="3.5"/>
<text x="771.3" y="885.5" font-size="13" text-anchor="middle" font-weight="bold" fill="#262626">65</text>
<rect x="805.00" y="831.00" width="62.50" height="60.00" fill="url(#pbtn)" rx="4"/>
<rect x="811.50" y="837.50" width="49.00" height="28.50" fill="#b2b2b2" stroke="#999999" stroke-width="1" rx="3.5"/>
<text x="836.3" y="885.5" font-size="13" text-anchor="middle" font-weight="bold" fill="#262626">70</text>
<rect x="870.00" y="831.00" width="62.50" height="60.00" fill="url(#pbtn)" rx="4"/>
<rect x="876.50" y="837.50" width="49.00" height="28.50" fill="#bfbfbf" stroke="#a3a3a3" stroke-width="1" rx="3.5"/>
<text x="901.3" y="885.5" font-size="13" text-anchor="middle" font-weight="bold" fill="#262626">75</text>
<rect x="935.00" y="831.00" width="62.50" height="60.00" fill="url(#pbtn)" rx="4"/>
<rect x="941.50" y="837.50" width="49.00" height="28.50" fill="#cccccc" stroke="#adadad" stroke-width="1" rx="3.5"/>
<text x="966.3" y="885.5" font-size="13" text-anchor="middle" font-weight="bold" fill="#262626">80</text>
<rect x="1000.00" y="831.00" width="62.50" height="60.00" fill="url(#pbtn)" rx="4"/>
<rect x="1006.50" y="837.50" width="49.00" height="28.50" fill="#d9d9d9" stroke="#b7b7b7" stroke-width="1" rx="3.5"/>
<text x="1031.3" y="885.5" font-size="13" text-anchor="middle" font-weight="bold" fill="#262626">85</text>
<rect x="1065.00" y="831.00" width="62.50" height="60.00" fill="url(#pbtn)" rx="4"/>
<rect x="1071.50" y="837.50" width="49.00" height="28.50" fill="#e5e5e5" stroke="#c2c2c2" stroke-width="1" rx="3.5"/>
<text x="1096.3" y="885.5" font-size="13" text-anchor="middle" font-weight="bold" fill="#262626">90</text>
<rect x="1130.00" y="831.00" width="62.50" height="60.00" fill="url(#pbtn)" rx="4"/>
<rect x="1136.50" y="837.50" width="49.00" height="28.50" fill="#f2f2f2" stroke="#cccccc" stroke-width="1" rx="3.5"/>
<text x="1161.3" y="885.5" font-size="13" text-anchor="middle" font-weight="bold" fill="#262626">95</text>
<rect x="1195.00" y="831.00" width="62.50" height="60.00" fill="url(#pbsel)" rx="4"/>
<rect x="1201.50" y="837.50" width="49.00" height="28.50" fill="#ffffff" stroke="#dddddd" stroke-width="1" rx="3.5"/>
<text x="1226.3" y="885.5" font-size="13" text-anchor="middle" font-weight="bold" fill="#ffffff">100</text>
<rect x="0.00" y="892.00" width="1259.50" height="11.00" fill="#6a6a6a"/>
<rect x="104.50" y="893.00" width="1139.00" height="10.00" fill="#4c4c4c" rx="5"/>
<rect x="0.00" y="892.50" width="10.00" height="10.50" fill="#9a9a9a" rx="2"/>
<path d="M6.5 894.5 L1.5 898.5 L6.5 902.5 Z" fill="#333"/>
<rect x="1246.50" y="892.50" width="13.00" height="10.50" fill="#9a9a9a" rx="2"/>
<path d="M1250.5 894.5 L1256 898.5 L1250.5 902.5 Z" fill="#333"/>
<path d="M1261 853 V835 Q1261 830 1266 830 H1316 Q1321 830 1321 835 V853 Z" fill="url(#pan)"/>
<rect x="1261.00" y="854.00" width="60.00" height="49.00" fill="url(#pan2)"/>
<line x1="1261.00" y1="853.50" x2="1321.00" y2="853.50" stroke="#4a4a4a" stroke-width="1"/>
<ellipse cx="1291.5" cy="842" rx="10" ry="9.5" fill="#7c7c7c"/>
<path d="M1285.5 844.5 L1291.5 838.5 L1297.5 844.5 Z" fill="#2e2e2e"/>
<rect x="1272.50" y="861.50" width="38.00" height="38.00" fill="url(#sqb)" stroke="#262626" stroke-width="2.4" rx="5"/>
<rect x="1283.00" y="872.00" width="17.00" height="17.00" fill="url(#sqi)"/>
<rect x="1322.00" y="830.00" width="330.00" height="38.00" fill="#2a2a2a"/>
<rect x="1322.00" y="830.00" width="58.00" height="37.50" fill="url(#tb)"/>
<circle cx="1351.3" cy="849.4" r="12.4" fill="url(#tcirc)"/>
<rect x="1380.80" y="830.00" width="55.20" height="37.50" fill="url(#tb)"/>
<circle cx="1409.3" cy="849.4" r="12.4" fill="url(#tcirc)"/>
<rect x="1436.80" y="830.00" width="55.80" height="37.50" fill="url(#tbd)"/>
<circle cx="1464.8" cy="849.4" r="12.4" fill="url(#tcircd)"/>
<rect x="1494.00" y="830.00" width="55.40" height="37.50" fill="url(#tb)"/>
<circle cx="1521.3" cy="849.4" r="12.4" fill="url(#tcirc)"/>
<rect x="1550.20" y="830.00" width="54.80" height="37.50" fill="url(#tb)"/>
<circle cx="1577.8" cy="849.4" r="12.4" fill="url(#tcirc)"/>
<rect x="1346.30" y="844.40" width="10.00" height="10.00" fill="#2c2c2c"/>
<path d="M1405 843 L1416 849.4 L1405 855.8 Z" fill="#2c2c2c"/>
<path d="M1461 843.5 H1458.5 V855.5 H1461 M1468.5 843.5 H1471 V855.5 H1468.5" fill="none" stroke="#2c2c2c" stroke-width="2.3"/>
<path d="M1461 849.5 H1468.6" fill="none" stroke="#2c2c2c" stroke-width="1.5"/>
<path d="M1463.6 846.6 L1460.6 849.5 L1463.6 852.4 Z M1466 846.6 L1469 849.5 L1466 852.4 Z" fill="#2c2c2c"/>
<path d="M1521.3 849.4 C1518.5 845 1513.5 845 1513.5 849.4 C1513.5 853.8 1518.5 853.8 1521.3 849.4 C1524.1 845 1529.1 845 1529.1 849.4 C1529.1 853.8 1524.1 853.8 1521.3 849.4 Z" fill="none" stroke="#2c2c2c" stroke-width="2"/>
<path d="M1571.3 848.5 A6.6 6.6 0 0 1 1583 845.5" fill="none" stroke="#2c2c2c" stroke-width="2.6"/>
<path d="M1584.3 850.3 A6.6 6.6 0 0 1 1572.6 853.3" fill="none" stroke="#2c2c2c" stroke-width="2.6"/>
<path d="M1585.5 841.5 V848 H1579 Z" fill="#2c2c2c"/>
<path d="M1570.1 857.3 V850.8 H1576.6 Z" fill="#2c2c2c"/>
<rect x="1605.80" y="830.00" width="46.00" height="37.50" fill="url(#dk)"/>
<circle cx="1634.5" cy="850" r="12.4" fill="#2e2e2e"/>
<path d="M1322 903 V874 Q1322 869.5 1327 869.5 H1492.6 V903 Z" fill="url(#bn)"/>
<rect x="1494.00" y="869.50" width="157.00" height="34.00" fill="url(#bn)"/>
<circle cx="1360.7" cy="887.2" r="12.4" fill="url(#tcirc)"/>
<circle cx="1629" cy="887.2" r="12.4" fill="url(#tcirc)"/>
<path d="M1359.5 881.5 L1354.5 887.2 L1359.5 893 M1366 881.5 L1361 887.2 L1366 893" fill="none" stroke="#2c2c2c" stroke-width="1.8"/>
<path d="M1624 881.5 L1629 887.2 L1624 893 M1630.5 881.5 L1635.5 887.2 L1630.5 893" fill="none" stroke="#2c2c2c" stroke-width="1.8"/>
<text x="1394.5" y="897.3" font-size="26" fill="#343434" textLength="62.0" lengthAdjust="spacingAndGlyphs" stroke="#343434" stroke-width="0.7" filter="url(#tsh)">Back</text>
<text x="1528.0" y="897.3" font-size="26" fill="#343434" textLength="64.0" lengthAdjust="spacingAndGlyphs" stroke="#343434" stroke-width="0.7" filter="url(#tsh)">Next</text>
</svg>
</body></html>
